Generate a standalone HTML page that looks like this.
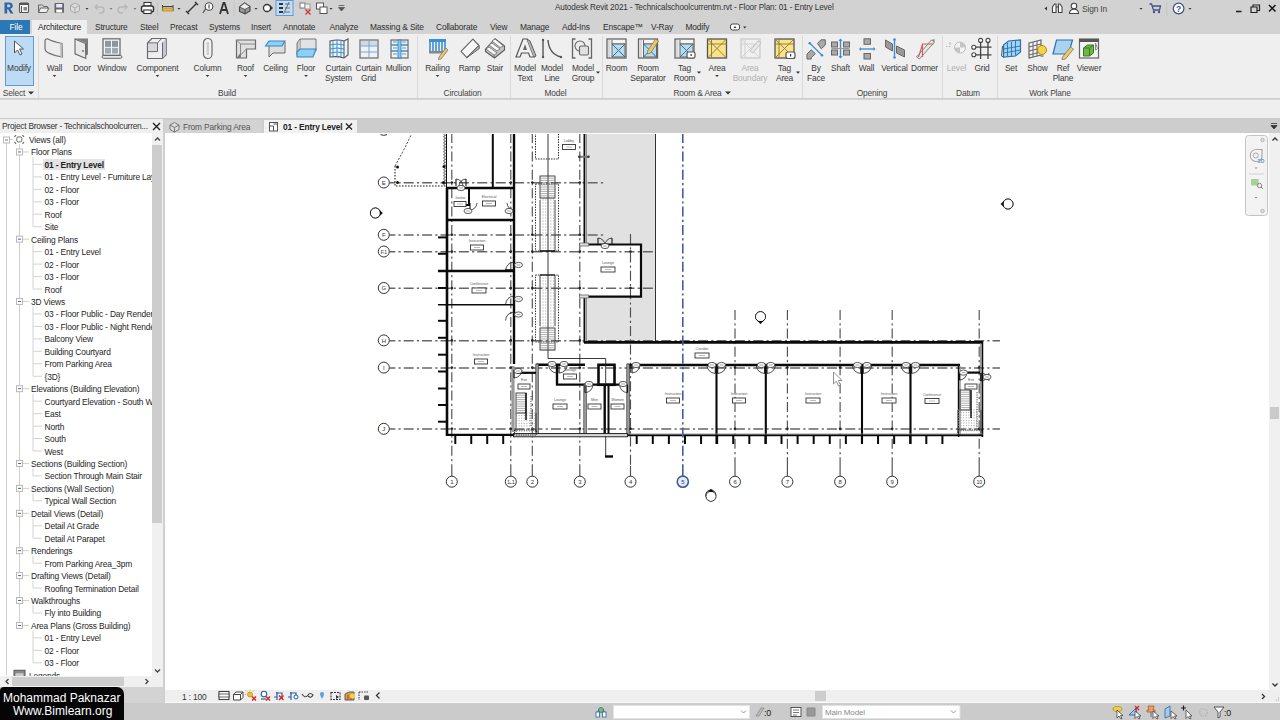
<!DOCTYPE html>
<html><head><meta charset="utf-8">
<style>
*{box-sizing:border-box}
html,body{margin:0;padding:0}
body{width:1280px;height:720px;overflow:hidden;position:relative;background:#d3d3d3;font-family:"Liberation Sans",sans-serif;font-size:8.4px;letter-spacing:-0.15px;color:#2e2e2e}
.a{position:absolute}
.t{position:absolute;white-space:nowrap;line-height:10px}
#titlebar{left:0;top:0;width:1280px;height:20px;background:#d2d2d2}
#tabrow{left:0;top:20px;width:1280px;height:14px;background:#d2d2d2}
#ribbon{left:0;top:34px;width:1280px;height:65px;background:#efefef;border-bottom:1px solid #cfcfcf}
#optbar{left:0;top:100px;width:1280px;height:19px;background:#efefef;border-bottom:1px solid #cbcbcb}
.rb{position:absolute;top:0;text-align:center;color:#3c3c3c;line-height:10.5px;white-space:nowrap}
.rl{position:absolute;top:53px;color:#444;white-space:nowrap}
.sep{position:absolute;top:2px;width:1px;height:62px;background:#dcdcdc}
.tab{position:absolute;top:4px;color:#333;white-space:nowrap}
.ic{position:absolute;top:3px}
.tree{position:absolute;color:#1e1e1e;white-space:nowrap;line-height:10px}

</style></head>
<body>
<div id="titlebar" class="a"></div>
<div id="tabrow" class="a"></div>
<svg class="a" style="left:0;top:0" width="1280" height="20">
 <!-- R logo -->
 <path d="M4.5,2.5 h5 a3.2,3.2 0 0 1 0.8,6.3 L13.5,13.5 h-3 L8,9.2 H7.2 V13.5 H4.5 Z M7.2,4.6 V7.2 H9 a1.3,1.3 0 0 0 0,-2.6 Z" fill="#2e67a8"/>
 <!-- project/info icon -->
 <rect x="19.5" y="3" width="9" height="9.5" rx="1" fill="#f4f4f4" stroke="#555" stroke-width="1.1"/><rect x="19.5" y="3" width="9" height="2" fill="#555"/><line x1="21.5" y1="6" x2="21.5" y2="12" stroke="#555"/><rect x="23.5" y="7" width="3.5" height="3.5" fill="#888"/>
 <!-- open -->
 <path d="M38.5,5 h4 l1,1.5 h4 v2 M38.5,5 v7.5 h8 l2.5,-4.5 h-8.5 l-2,4.5" fill="#eee" stroke="#666" stroke-width="1"/>
 <!-- save -->
 <rect x="54.5" y="3" width="9.5" height="10" rx="1" fill="#666"/><rect x="56.2" y="4" width="6" height="3.5" fill="#e8e8ff"/><rect x="56.2" y="9.5" width="6" height="3" fill="#fff"/>
 <!-- sync cube gray -->
 <path d="M70.5,5.5 L75,3 L79.5,5.5 V10.5 L75,13 L70.5,10.5 Z" fill="#ddd" stroke="#aaa" stroke-width="1"/><path d="M70.5,5.5 L75,8 L79.5,5.5 M75,8 V13" stroke="#aaa" fill="none"/>
 <path d="M85.5,8 h3 l-1.5,1.8z" fill="#333"/>
 <!-- undo -->
 <path d="M95,7 h6 a3,3 0 0 1 0,6 h-2 M97.5,4.5 L95,7 L97.5,9.5" fill="none" stroke="#b8b8b8" stroke-width="1.5"/>
 <path d="M109.5,8 h3 l-1.5,1.8z" fill="#777"/>
 <!-- redo -->
 <path d="M127,7 h-6 a3,3 0 0 0 0,6 h2 M124.5,4.5 L127,7 L124.5,9.5" fill="none" stroke="#b8b8b8" stroke-width="1.5"/>
 <path d="M133.5,8 h3 l-1.5,1.8z" fill="#777"/>
 <!-- print -->
 <rect x="144" y="2.5" width="7" height="3.5" fill="#fff" stroke="#333" stroke-width="1.1"/><rect x="141.5" y="6" width="12" height="6" rx="2" fill="#fafafa" stroke="#333" stroke-width="1.5"/><rect x="143.8" y="10" width="7.4" height="3.5" fill="#fff" stroke="#333" stroke-width="1.1"/>
 <line x1="157.5" y1="2" x2="157.5" y2="16" stroke="#c4c4c4"/>
 <!-- measure -->
 <path d="M162.5,5 V11 M173,5 V11 M162.5,6.5 H173" stroke="#444" stroke-width="1"/><rect x="162.5" y="8" width="10.5" height="3" fill="#e8b83a" stroke="#9a7a20" stroke-width="0.6"/>
 <path d="M177.5,8 h3 l-1.5,1.8z" fill="#333"/>
 <!-- aligned dim -->
 <path d="M187,13 L197,3 M186,11 L189,14 M195,2 L198,5" stroke="#333" stroke-width="1.4"/>
 <!-- tag -->
 <path d="M203,13 L206,8 " stroke="#555" stroke-width="1.3"/><circle cx="209" cy="6.5" r="3.8" fill="#fff" stroke="#444" stroke-width="1.1"/><path d="M209,4.5 V8.5" stroke="#333"/>
 <!-- A -->
 <path d="M220,14 L223.5,3 H224.5 L228,14 M221.5,10 H226.5" stroke="#333" stroke-width="1.8" fill="none"/>
 <line x1="234" y1="2" x2="234" y2="16" stroke="#c4c4c4"/>
 <!-- 3D house -->
 <path d="M239.5,7 L244.5,3 L250,6.5 V11 L245,14 L239.5,11.5 Z" fill="#999" stroke="#444" stroke-width="1.1"/><path d="M239.5,7 L244.5,3 L250,6.5 L245,9.5Z" fill="#eee" stroke="#444" stroke-width="0.8"/><path d="M245,9.5 V14" stroke="#444" fill="none"/>
 <path d="M254.5,8 h3 l-1.5,1.8z" fill="#333"/>
 <!-- section -->
 <circle cx="267" cy="8" r="3.5" fill="#fff" stroke="#333" stroke-width="1.3"/><path d="M270,5 L273,8 L270,11" fill="#333"/>
 <!-- thin lines (active) -->
 <rect x="276" y="0.5" width="17" height="15" fill="#c4dcf3" stroke="#5f9bd3"/>
 <path d="M279,4 h4 M279,8 h4 M279,12 h4" stroke="#333" stroke-width="1.8"/><path d="M285,4 h5 M285,8 h5 M285,12 h5 M283.5,14 L289,2" stroke="#555" stroke-width="0.8"/>
 <!-- close hidden -->
 <rect x="300" y="3" width="5" height="5" fill="#fff" stroke="#777"/><rect x="305" y="4" width="5" height="5" fill="#eee" stroke="#999"/><path d="M305.5,9.5 L310.5,14.5 M310.5,9.5 L305.5,14.5" stroke="#d33" stroke-width="1.4"/>
 <!-- switch windows -->
 <rect x="316.5" y="3" width="7" height="6" fill="#fff" stroke="#555"/><rect x="320" y="7" width="7" height="6.5" fill="#fff" stroke="#555"/>
 <path d="M329.5,8 h3 l-1.5,1.8z" fill="#333"/>
 <!-- customize -->
 <path d="M338.5,5.5 h6 M338.5,7.5 h6 L341.5,11 Z" stroke="#555" fill="#555" stroke-width="0.8"/>
 <!-- right side -->
 <path d="M1047,6.5 V10.5 L1044.5,8.5Z" fill="#333"/>
 <path d="M1052.5,12.5 V7 L1054.5,4 h1.5 V12.5 Z M1058.5,12.5 V4 h1.5 l2,3 V12.5 Z M1056,7 h2.5" fill="#fff" stroke="#444" stroke-width="1.1"/>
 <circle cx="1074" cy="6" r="2.8" fill="#fff" stroke="#444" stroke-width="1.1"/><path d="M1069.5,13.5 c0,-3 2,-4.2 4.5,-4.2 c2.5,0 4.5,1.2 4.5,4.2 Z" fill="#fff" stroke="#444" stroke-width="1.1"/>
 <path d="M1139.5,8 h3 l-1.5,1.8z" fill="#333"/>
 <path d="M1149.5,4 h2 l2,6 h6 l1,-4 h-8" stroke="#44548a" stroke-width="1.3" fill="none"/><circle cx="1154" cy="12" r="1.2" fill="#44548a"/><circle cx="1159" cy="12" r="1.2" fill="#44548a"/>
 <line x1="1166.7" y1="2" x2="1166.7" y2="16" stroke="#c4c4c4"/>
 <circle cx="1178.6" cy="8.5" r="5.3" fill="#fff" stroke="#3b4f88" stroke-width="1.2"/><text x="1178.6" y="11.5" font-size="8.5" font-weight="bold" fill="#3b4f88" text-anchor="middle" font-family="Liberation Sans">?</text>
 <path d="M1188.5,8 h3 l-1.5,1.8z" fill="#333"/>
 <path d="M1236,11.5 h5.5" stroke="#222" stroke-width="1.6"/>
 <path d="M1251,7 h6 v5.5 h-6 Z M1253,7 V5 h6.5 v5.5 h-2.5" fill="none" stroke="#222" stroke-width="1.2"/>
 <path d="M1269,5 L1275.5,11.5 M1275.5,5 L1269,11.5" stroke="#111" stroke-width="1.5"/>
</svg>
<div class="a" style="left:0;top:20px;width:30px;height:14px;background:#2a78b5"></div>
<div class="t" style="left:9.5px;top:21.7px;color:#fff;">File</div>
<div class="a" style="left:32px;top:20px;width:55px;height:14px;background:#efefef"></div>
<div class="t" style="left:38px;top:21.7px;color:#222">Architecture</div>
<div class="t" style="left:95px;top:21.7px">Structure</div>
<div class="t" style="left:140px;top:21.7px">Steel</div>
<div class="t" style="left:170px;top:21.7px">Precast</div>
<div class="t" style="left:209px;top:21.7px">Systems</div>
<div class="t" style="left:251px;top:21.7px">Insert</div>
<div class="t" style="left:283px;top:21.7px">Annotate</div>
<div class="t" style="left:329.5px;top:21.7px">Analyze</div>
<div class="t" style="left:370px;top:21.7px">Massing &amp; Site</div>
<div class="t" style="left:436px;top:21.7px">Collaborate</div>
<div class="t" style="left:490px;top:21.7px">View</div>
<div class="t" style="left:520px;top:21.7px">Manage</div>
<div class="t" style="left:562px;top:21.7px">Add-Ins</div>
<div class="t" style="left:603px;top:21.7px">Enscape™</div>
<div class="t" style="left:651px;top:21.7px">V-Ray</div>
<div class="t" style="left:685.5px;top:21.7px">Modify</div>
<svg class="a" style="left:728px;top:21.7px" width="22" height="10"><rect x="2.5" y="2" width="9" height="6" rx="2" fill="#fff" stroke="#444"/><path d="M5.5,6 L7,4 L8.5,6Z" fill="#333"/><path d="M15,4.5 h3.5 l-1.75,2z" fill="#333"/></svg>
<div class="t" style="left:555px;top:3px;color:#333;font-size:8.2px">Autodesk Revit 2021 - Technicalschoolcurrentm.rvt - Floor Plan: 01 - Entry Level</div>
<div class="t" style="left:1082px;top:3.5px;color:#444">Sign In</div>

<div id="ribbon" class="a"></div>
<div id="optbar" class="a"></div>
<div class="a" style="left:4.5px;top:36px;width:29.5px;height:50px;background:#bddbf5;border:1px solid #5f9bd3"></div>
<svg class="a" style="left:0;top:0" width="1280" height="100">
<g transform="translate(9.5,38)"><path d="M5,3 L5,15 L8,12 L10.5,17 L12.5,16 L10,11 L14,11 Z" fill="#fff" stroke="#555" stroke-width="1"/></g>
<g transform="translate(43.5,38)"><path d="M1.5,3 Q1.5,0.5 4.5,1 Q9,3.5 18.5,5.5 L19,19 Q10,17.5 4,14.5 Q1.5,13 1.5,11 Z" fill="#ececec" stroke="#6e6e6e" stroke-width="1.2"/><path d="M16.5,5.2 L18.5,5.5 L19,19 L17,19.2 Z" fill="#bcbcbc"/></g>
<path d="M52.7,75 L56.3,75 L54.5,77 Z" fill="#333"/>
<g transform="translate(74,38)"><path d="M1,0.5 H14 V16.5 L12,17.5 L12,5 Z" fill="#7d7d7d"/><path d="M1,1 L11.5,5.5 L11.8,20.5 L1,15.8 Z" fill="#e8e8ec" stroke="#666" stroke-width="1.1"/><circle cx="9" cy="13" r="1" fill="#777"/></g>
<g transform="translate(101.5,38)"><rect x="1.5" y="0.8" width="17" height="16.5" fill="#f4f4f4" stroke="#6e6e6e" stroke-width="1.3"/><rect x="3.5" y="2.8" width="6" height="6" fill="#8e959e"/><rect x="10.5" y="2.8" width="6" height="6" fill="#8e959e"/><rect x="3.5" y="9.8" width="6" height="5.8" fill="#a3a9b0"/><rect x="10.5" y="9.8" width="6" height="5.8" fill="#a3a9b0"/><path d="M2,17.5 H19 a1.4,1.4 0 0 1 0,2.8 H2 a1.4,1.4 0 0 1 0,-2.8Z" fill="#e6e6e6" stroke="#666" stroke-width="1"/></g>
<g transform="translate(146.5,38)"><path d="M1,4.9 L5.4,0.5 H19.7 V16.7 L15.7,20.5 H1 Z" fill="#eeeef0" stroke="#6a6a6a" stroke-width="1.2" stroke-linejoin="round"/><path d="M16,4.6 L19.5,0.9 V16.6 L16,20.2 Z" fill="#c2c6ce"/><rect x="1.8" y="5.6" width="8.6" height="7.4" fill="#d8d8dc"/><path d="M1,13.6 H11 V4.9 H1 M11,4.9 L14.8,0.8 M16,4.6 V20.2" stroke="#6a6a6a" fill="none" stroke-width="1"/></g>
<path d="M155.7,75 L159.3,75 L157.5,77 Z" fill="#333"/>
<g transform="translate(197,38)"><rect x="6.5" y="0.5" width="8.5" height="20" rx="4.2" fill="#f2f2f2" stroke="#6e6e6e" stroke-width="1.2"/><rect x="9.5" y="4" width="2.5" height="13" fill="#cfcfd3"/></g>
<path d="M205.7,75 L209.3,75 L207.5,77 Z" fill="#333"/>
<g transform="translate(235.5,38)"><path d="M1,2 L20,2 L20,11 L11,11 L11,20 L1,20 Z" fill="#e0e0e0" stroke="#6a6a6a" stroke-width="1.2"/><path d="M1,2 L5,6 L20,6 M5,6 L5,20 M11,11 L5,17" fill="none" stroke="#888"/><path d="M1,20 L5,15 L5,20Z" fill="#777"/></g>
<path d="M243.7,75 L247.3,75 L245.5,77 Z" fill="#333"/>
<g transform="translate(265,38)"><path d="M4,4 L20,4 L20,15 L8,15 L4,19 Z" fill="#dedede" stroke="#6a6a6a"/><path d="M0.5,8 L4,3 L20,3 L17,8 Z" fill="#8fd0f2" stroke="#3385c6" stroke-width="1.1"/></g>
<g transform="translate(296,38)"><path d="M4,1 L20,1 L20,13 L4,13 Z" fill="#e2e2e2" stroke="#777"/><path d="M4,1 L1,5 L1,17 L4,13" fill="#c8c8c8" stroke="#777"/><path d="M1,14 L4,11 L20,11 L17,19 L1,19 Z" fill="#8fd0f2" stroke="#3385c6" stroke-width="1.1"/></g>
<path d="M304.2,75 L307.8,75 L306,77 Z" fill="#333"/>
<g transform="translate(328,38)"><path d="M2,3 Q10,1 16,3 L20,1 L20,17 L16,20 Q10,18 2,19 Z" fill="#eaf4fb" stroke="#555" stroke-width="1.1"/><path d="M5,2.5 V18.5 M9,2 V18.5 M13,2.3 V19 M2,7 Q9,5 16,7 M2,11 Q9,9 16,11 M2,15 Q9,13 16,15" stroke="#3f8fd0" stroke-width="1" fill="none"/><path d="M16,3 L16,20" stroke="#555"/></g>
<g transform="translate(358,38)"><rect x="2" y="2" width="18" height="18" fill="#eef2f6" stroke="#6a6a6a" stroke-width="1.2"/><rect x="3" y="3" width="16" height="5" fill="#cfdce8"/><path d="M11,2 V20 M2,8 H20 M2,14 H20" stroke="#7aa6cc" stroke-width="1"/></g>
<g transform="translate(389,38)"><rect x="2" y="2" width="17" height="18" fill="#f0f0f0" stroke="#6a6a6a" stroke-width="1.2"/><path d="M2,7 H19 M2,13 H19" stroke="#3f8fd0" stroke-width="1.6"/><rect x="9" y="2" width="3" height="18" fill="#8cc6ee" stroke="#2f7fc0" stroke-width="0.8"/><path d="M4,4 H8 M13,4 H17 M4,10 H8 M13,10 H17 M4,16 H8 M13,16 H17" stroke="#9bb" stroke-width="1.5"/></g>
<g transform="translate(428,38)"><rect x="1" y="1" width="17" height="3" fill="#3f8fd0"/><path d="M2,4 V14 M5,4 V14 M8,4 V14 M11,4 V14 M14,4 V14 M17,4 V14" stroke="#3f8fd0" stroke-width="1.6"/><rect x="1" y="13" width="17" height="2.5" fill="#888"/><path d="M11,19 L18,10 L20,12 L13,21 L10.5,21.5 Z" fill="#f3c85a" stroke="#777" stroke-width="0.8"/></g>
<path d="M435.7,75 L439.3,75 L437.5,77 Z" fill="#333"/>
<g transform="translate(460,38)"><path d="M1,13.3 L12.9,1.1 L19,7.5 L6.9,19.6 Z" fill="#f7f7f7" stroke="#626262" stroke-width="1.1" stroke-linejoin="round"/><path d="M19,7.5 L19.4,10.5 L6.9,19.6 Z" fill="#b9b9b9" stroke="#626262" stroke-width="1" stroke-linejoin="round"/></g>
<g transform="translate(484.5,38)"><path d="M1,11 L10.5,0.8 L20,8 L20,12 L10,20 L1,13.5 Z" fill="#c4c4c4" stroke="#5e5e5e" stroke-width="1.1" stroke-linejoin="round"/><path d="M1.5,11 L4.5,9 L12.5,15 L9.5,17 Z M4.5,7 L7.5,5 L15.5,11 L12.5,13 Z M7.5,3 L10.5,1 L19,8 L15.5,9.5 Z" fill="#fafafa" stroke="#6a6a6a" stroke-width="0.8"/><path d="M9.5,17 L10,20 M1.5,11 L1,13.5" stroke="#5e5e5e" stroke-width="0.8"/></g>
<g transform="translate(515,38)"><path d="M1,19 L8,1 L12,1 L19,19 L15,19 L13.5,15 L6.5,15 L5,19 Z" fill="#f2f2f2" stroke="#555" stroke-width="1.2"/><path d="M12,1 L15,3 L21,18 L19,19" fill="#bbb" stroke="#555"/><path d="M8,12 L10,6 L12,12 Z" fill="#666"/></g>
<g transform="translate(541,38)"><path d="M2,2 V19" stroke="#555" stroke-width="1.4"/><circle cx="2" cy="2" r="1.2" fill="#555"/><circle cx="2" cy="19" r="1.2" fill="#555"/><path d="M7,2 Q8,16 20,19" stroke="#555" stroke-width="1.4" fill="none"/><circle cx="20" cy="19" r="1.2" fill="#555"/></g>
<g transform="translate(571.5,38)"><path d="M4,1 H1 V20 H4 M17,1 H20 V20 H17" stroke="#666" stroke-width="1.3" fill="none"/><circle cx="8.5" cy="8" r="5" fill="#ececec" stroke="#666" stroke-width="1.1"/><rect x="8" y="8" width="9" height="9" rx="1.5" fill="#e0e0e0" stroke="#666" stroke-width="1.1"/></g>
<g transform="translate(606,38)"><rect x="1" y="1" width="19" height="19" fill="#f5f5f5" stroke="#666" stroke-width="1.3"/><rect x="2" y="2" width="2.5" height="17" fill="#d8d8d8"/><path d="M6,2 V6 H19" stroke="#666" fill="none"/><rect x="6" y="6" width="13" height="13" fill="#b5dcf0" stroke="#666"/><path d="M6,6 L19,19 M19,6 L6,19" stroke="#3b6e8f" stroke-width="1"/></g>
<g transform="translate(637.5,38)"><rect x="1" y="1" width="19" height="19" fill="#f5f5f5" stroke="#666" stroke-width="1.3"/><rect x="2" y="2" width="2.5" height="17" fill="#d8d8d8"/><path d="M6,2 V6 H19" stroke="#666" fill="none"/><rect x="6" y="6" width="13" height="13" fill="#b5dcf0" stroke="#666"/><path d="M6,6 L19,19 M19,6 L6,19" stroke="#3b6e8f" stroke-width="1"/><path d="M10,13 L18,1 L21,3 L13,15 L10,16 Z" fill="#f3c85a" stroke="#777" stroke-width="0.8"/></g>
<g transform="translate(674,38)"><rect x="1" y="1" width="19" height="19" fill="#f5f5f5" stroke="#666" stroke-width="1.3"/><rect x="2" y="2" width="2.5" height="17" fill="#d8d8d8"/><path d="M6,2 V6 H19" stroke="#666" fill="none"/><rect x="6" y="6" width="13" height="13" fill="#b5dcf0" stroke="#666"/><path d="M6,6 L19,19 M19,6 L6,19" stroke="#3b6e8f" stroke-width="1"/><rect x="13" y="14" width="8" height="6" rx="1.5" fill="#fff" stroke="#555" stroke-width="1.2"/><rect x="16.5" y="16" width="1.2" height="2" fill="#333"/></g>
<g transform="translate(706.5,38)"><rect x="1" y="1" width="19" height="19" fill="#fbe38a" stroke="#555" stroke-width="1.3"/><path d="M1,6 H20 M5,1 V20 M1,1 L20,20 M20,1 L1,20" stroke="#8a7a3a" stroke-width="0.9"/></g>
<path d="M715.2,75 L718.8,75 L717,77 Z" fill="#333"/>
<g transform="translate(740,38)"><g opacity="0.35"><rect x="1" y="1" width="19" height="19" fill="#f2f2f2" stroke="#888" stroke-width="1.3"/><path d="M1,6 H20 M5,1 V20 M1,1 L20,20 M20,1 L1,20" stroke="#999" stroke-width="0.9"/><path d="M10,13 L18,3 L21,5 L13,15 Z" fill="#ddd" stroke="#777"/></g></g>
<g transform="translate(774,38)"><rect x="1" y="1" width="19" height="19" fill="#fbe38a" stroke="#555" stroke-width="1.3"/><path d="M1,6 H20 M5,1 V20 M1,1 L20,20 M20,1 L1,20" stroke="#8a7a3a" stroke-width="0.9"/><rect x="12" y="14" width="9" height="6.5" rx="2" fill="#fff" stroke="#555" stroke-width="1.2"/><rect x="16" y="16" width="1.2" height="2.5" fill="#333"/></g>
<g transform="translate(806,38)"><path d="M11.5,5.5 L15,1.8 H19.3 V7 L15.3,10.8 Z" fill="#a9a9a9" stroke="#666" stroke-width="1"/><path d="M1,16 L5.2,11.8 L9.3,15.6 L5.3,19.6 V21 H1 Z" fill="#a9a9a9" stroke="#666" stroke-width="1"/><path d="M3.8,5.2 L16,17.3" stroke="#3f8fd0" stroke-width="1.2"/><circle cx="3.8" cy="5.2" r="1.3" fill="#3f8fd0"/><circle cx="16" cy="17.3" r="1.3" fill="#3f8fd0"/></g>
<g transform="translate(830.5,38)"><rect x="1" y="4" width="6" height="5" fill="#aaa" stroke="#666"/><rect x="13" y="4" width="6" height="5" fill="#aaa" stroke="#666"/><rect x="1" y="12" width="6" height="5" fill="#aaa" stroke="#666"/><rect x="13" y="12" width="6" height="5" fill="#aaa" stroke="#666"/><path d="M10,1 V20" stroke="#3f8fd0" stroke-width="1.4"/><path d="M8,3 L10,0.5 L12,3 M8,18 L10,20.5 L12,18" fill="#3f8fd0"/><path d="M1,10.5 H19" stroke="#999"/></g>
<g transform="translate(856.5,38)"><rect x="7.5" y="0.8" width="6.5" height="5.5" fill="#a9a9a9" stroke="#666" stroke-width="1"/><rect x="7.5" y="15.5" width="6.5" height="5.5" fill="#a9a9a9" stroke="#666" stroke-width="1"/><path d="M3.5,11 H18" stroke="#3f8fd0" stroke-width="1.3"/><path d="M4.5,9 L2.5,11 L4.5,13 Z M17,9 L19,11 L17,13 Z" fill="#3f8fd0"/></g>
<g transform="translate(884.5,38)"><path d="M1,2 L8,6 L8,13 L1,9 Z" fill="#999" stroke="#666"/><path d="M12,8 L20,12 L20,19 L12,15 Z" fill="#999" stroke="#666"/><path d="M10,1 V20" stroke="#3f8fd0" stroke-width="1.4"/><circle cx="10" cy="1.5" r="1.3" fill="#3f8fd0"/><circle cx="10" cy="19.5" r="1.3" fill="#3f8fd0"/></g>
<g transform="translate(914.5,38)"><path d="M2,19 L17,2 L20,4 L5,21 Z" fill="#e6e6e6" stroke="#888"/><path d="M4,19 L8,6 L19,6 M8,6 L8,19" stroke="#c96060" stroke-width="1.1" fill="none"/><path d="M17,2 L20,1 L20,4 Z" fill="#888"/></g>
<g transform="translate(945,38)"><g opacity="0.35"><path d="M1,8.5 H7" stroke="#555" stroke-dasharray="1.5 1.5"/><path d="M5,4 V7" stroke="#555"/><circle cx="15" cy="9.5" r="5.5" fill="#fff" stroke="#666"/><path d="M15,4 A5.5,5.5 0 0 1 20.5,9.5 H15Z M15,15 A5.5,5.5 0 0 1 9.5,9.5 H15Z" fill="#777"/></g></g>
<g transform="translate(971,38)"><path d="M9.6,4.5 V21 M17,4.5 V21 M4.8,9.2 H20.5 M4.8,16.8 H20.5" stroke="#444" stroke-width="1.3"/><circle cx="9.6" cy="2.4" r="2" fill="#fff" stroke="#444" stroke-width="1.1"/><circle cx="17" cy="2.4" r="2" fill="#fff" stroke="#444" stroke-width="1.1"/><circle cx="2.8" cy="9.2" r="2" fill="#fff" stroke="#444" stroke-width="1.1"/><circle cx="2.8" cy="16.8" r="2" fill="#fff" stroke="#444" stroke-width="1.1"/></g>
<g transform="translate(1000.5,38)"><path d="M3,7 L8,3 L20,2 L20,14 L15,18 L3,19 Z" fill="#9fd3f2" stroke="#2a70b0" stroke-width="1.2"/><path d="M7,5 V18 M11,4 V18 M15,3 V17 M3,11 L20,8 M3,15 L20,12" stroke="#2a70b0" stroke-width="0.9" fill="none"/><path d="M2,8 L1,18 L3,19" stroke="#555" fill="none"/></g>
<g transform="translate(1027,38)"><path d="M2,5 L14,2 L14,17 L2,20 Z" fill="#f0f0f0" stroke="#666" stroke-width="1.2"/><path d="M6,4 V19 M10,3 V18 M2,9 L14,6 M2,13 L14,10 M2,17 L14,14" stroke="#666"/><circle cx="15" cy="12" r="4.5" fill="#f5d443" stroke="#b08a10"/><rect x="13.5" y="16" width="3" height="3" fill="#999"/></g>
<g transform="translate(1052.5,38)"><path d="M4,2 L20,2 L16,16 L0.5,16 Z" fill="#a7d4ef" stroke="#2f6fb0" stroke-width="1.2"/><path d="M10,19 L18,9 L21,11 L13,21 L9.5,21.5 Z" fill="#f3c85a" stroke="#777" stroke-width="0.8"/></g>
<g transform="translate(1078.5,38)"><rect x="1" y="1" width="19" height="19" fill="#f4f4f4" stroke="#666" stroke-width="1.2"/><rect x="1" y="1" width="19" height="3" fill="#555"/><path d="M5,10 L9,7 L15,7 L15,15 L11,18 L5,18 Z" fill="#6db845" stroke="#3b7a22"/><path d="M5,10 L11,10 L15,7 M11,10 V18" stroke="#3b7a22" fill="none"/><path d="M17,5 L17,12 L19,10.5 Z" fill="#fff" stroke="#888"/></g>
</svg>
<div class="t" style="left:-21px;width:80px;text-align:center;top:62.5px;color:#3a3a3a">Modify</div>
<div class="t" style="left:14.5px;width:80px;text-align:center;top:62.5px;color:#3a3a3a">Wall</div>
<div class="t" style="left:42px;width:80px;text-align:center;top:62.5px;color:#3a3a3a">Door</div>
<div class="t" style="left:72px;width:80px;text-align:center;top:62.5px;color:#3a3a3a">Window</div>
<div class="t" style="left:117.5px;width:80px;text-align:center;top:62.5px;color:#3a3a3a">Component</div>
<div class="t" style="left:167.5px;width:80px;text-align:center;top:62.5px;color:#3a3a3a">Column</div>
<div class="t" style="left:205.5px;width:80px;text-align:center;top:62.5px;color:#3a3a3a">Roof</div>
<div class="t" style="left:235.5px;width:80px;text-align:center;top:62.5px;color:#3a3a3a">Ceiling</div>
<div class="t" style="left:266px;width:80px;text-align:center;top:62.5px;color:#3a3a3a">Floor</div>
<div class="t" style="left:298.5px;width:80px;text-align:center;top:62.5px;color:#3a3a3a">Curtain</div>
<div class="t" style="left:298.5px;width:80px;text-align:center;top:73.0px;color:#3a3a3a">System</div>
<div class="t" style="left:328.5px;width:80px;text-align:center;top:62.5px;color:#3a3a3a">Curtain</div>
<div class="t" style="left:328.5px;width:80px;text-align:center;top:73.0px;color:#3a3a3a">Grid</div>
<div class="t" style="left:358.5px;width:80px;text-align:center;top:62.5px;color:#3a3a3a">Mullion</div>
<div class="t" style="left:397.5px;width:80px;text-align:center;top:62.5px;color:#3a3a3a">Railing</div>
<div class="t" style="left:429.5px;width:80px;text-align:center;top:62.5px;color:#3a3a3a">Ramp</div>
<div class="t" style="left:455px;width:80px;text-align:center;top:62.5px;color:#3a3a3a">Stair</div>
<div class="t" style="left:485px;width:80px;text-align:center;top:62.5px;color:#3a3a3a">Model</div>
<div class="t" style="left:485px;width:80px;text-align:center;top:73.0px;color:#3a3a3a">Text</div>
<div class="t" style="left:512px;width:80px;text-align:center;top:62.5px;color:#3a3a3a">Model</div>
<div class="t" style="left:512px;width:80px;text-align:center;top:73.0px;color:#3a3a3a">Line</div>
<div class="t" style="left:543px;width:80px;text-align:center;top:62.5px;color:#3a3a3a">Model</div>
<div class="t" style="left:543px;width:80px;text-align:center;top:73.0px;color:#3a3a3a">Group</div>
<svg class="a" style="left:596px;top:71px" width="5" height="4"><path d="M0,0.5 H4 L2,2.8Z" fill="#333"/></svg>
<div class="t" style="left:576.5px;width:80px;text-align:center;top:62.5px;color:#3a3a3a">Room</div>
<div class="t" style="left:608px;width:80px;text-align:center;top:62.5px;color:#3a3a3a">Room</div>
<div class="t" style="left:608px;width:80px;text-align:center;top:73.0px;color:#3a3a3a">Separator</div>
<div class="t" style="left:644.5px;width:80px;text-align:center;top:62.5px;color:#3a3a3a">Tag</div>
<div class="t" style="left:644.5px;width:80px;text-align:center;top:73.0px;color:#3a3a3a">Room</div>
<svg class="a" style="left:696.5px;top:71px" width="5" height="4"><path d="M0,0.5 H4 L2,2.8Z" fill="#333"/></svg>
<div class="t" style="left:677px;width:80px;text-align:center;top:62.5px;color:#3a3a3a">Area</div>
<div class="t" style="left:710px;width:80px;text-align:center;top:62.5px;color:#b0b0b0">Area</div>
<div class="t" style="left:710px;width:80px;text-align:center;top:73.0px;color:#b0b0b0">Boundary</div>
<div class="t" style="left:744.5px;width:80px;text-align:center;top:62.5px;color:#3a3a3a">Tag</div>
<div class="t" style="left:744.5px;width:80px;text-align:center;top:73.0px;color:#3a3a3a">Area</div>
<svg class="a" style="left:795.5px;top:71px" width="5" height="4"><path d="M0,0.5 H4 L2,2.8Z" fill="#333"/></svg>
<div class="t" style="left:776px;width:80px;text-align:center;top:62.5px;color:#3a3a3a">By</div>
<div class="t" style="left:776px;width:80px;text-align:center;top:73.0px;color:#3a3a3a">Face</div>
<div class="t" style="left:800.5px;width:80px;text-align:center;top:62.5px;color:#3a3a3a">Shaft</div>
<div class="t" style="left:826.5px;width:80px;text-align:center;top:62.5px;color:#3a3a3a">Wall</div>
<div class="t" style="left:854.5px;width:80px;text-align:center;top:62.5px;color:#3a3a3a">Vertical</div>
<div class="t" style="left:884.5px;width:80px;text-align:center;top:62.5px;color:#3a3a3a">Dormer</div>
<div class="t" style="left:916.5px;width:80px;text-align:center;top:62.5px;color:#b0b0b0">Level</div>
<div class="t" style="left:942px;width:80px;text-align:center;top:62.5px;color:#3a3a3a">Grid</div>
<div class="t" style="left:971px;width:80px;text-align:center;top:62.5px;color:#3a3a3a">Set</div>
<div class="t" style="left:997.5px;width:80px;text-align:center;top:62.5px;color:#3a3a3a">Show</div>
<div class="t" style="left:1023px;width:80px;text-align:center;top:62.5px;color:#3a3a3a">Ref</div>
<div class="t" style="left:1023px;width:80px;text-align:center;top:73.0px;color:#3a3a3a">Plane</div>
<div class="t" style="left:1049px;width:80px;text-align:center;top:62.5px;color:#3a3a3a">Viewer</div>
<div class="t" style="left:-31px;width:90px;text-align:center;top:87.5px;color:#444">Select</div>
<svg class="a" style="left:28px;top:91px" width="6" height="4"><path d="M0,0.5 H6 L3,3.5Z" fill="#333"/></svg>
<div class="t" style="left:182px;width:90px;text-align:center;top:87.5px;color:#444">Build</div>
<div class="t" style="left:417.5px;width:90px;text-align:center;top:87.5px;color:#444">Circulation</div>
<div class="t" style="left:510.5px;width:90px;text-align:center;top:87.5px;color:#444">Model</div>
<div class="t" style="left:652.5px;width:90px;text-align:center;top:87.5px;color:#444">Room &amp; Area</div>
<svg class="a" style="left:725px;top:91px" width="6" height="4"><path d="M0,0.5 H6 L3,3.5Z" fill="#333"/></svg>
<div class="t" style="left:827px;width:90px;text-align:center;top:87.5px;color:#444">Opening</div>
<div class="t" style="left:923px;width:90px;text-align:center;top:87.5px;color:#444">Datum</div>
<div class="t" style="left:1005px;width:90px;text-align:center;top:87.5px;color:#444">Work Plane</div>
<div class="a" style="left:37.5px;top:36px;width:1px;height:62px;background:#dadada"></div>
<div class="a" style="left:416.5px;top:36px;width:1px;height:62px;background:#dadada"></div>
<div class="a" style="left:509.5px;top:36px;width:1px;height:62px;background:#dadada"></div>
<div class="a" style="left:601.5px;top:36px;width:1px;height:62px;background:#dadada"></div>
<div class="a" style="left:801.5px;top:36px;width:1px;height:62px;background:#dadada"></div>
<div class="a" style="left:941.5px;top:36px;width:1px;height:62px;background:#dadada"></div>
<div class="a" style="left:997px;top:36px;width:1px;height:62px;background:#dadada"></div>
<div class="a" style="left:0;top:119px;width:163px;height:568px;background:#fff"></div>
<div class="a" style="left:0;top:119px;width:163px;height:14px;background:#efefef"></div>
<div class="t" style="left:2px;top:121px;color:#333;letter-spacing:-0.25px">Project Browser - Technicalschoolcurren...</div>
<svg class="a" style="left:152px;top:122px" width="9" height="9"><path d="M1,1 L8,8 M8,1 L1,8" stroke="#222" stroke-width="1.4"/></svg>
<div class="a" style="left:0;top:133px;width:152px;height:543px;overflow:hidden">
<svg class="a" style="left:0;top:0" width="152" height="543"><line x1="6.5" y1="9.5" x2="6.5" y2="542.2800000000001" stroke="#cfcfcf" stroke-width="1"/><line x1="19.5" y1="11.5" x2="19.5" y2="492.44000000000005" stroke="#cfcfcf" stroke-width="1"/><line x1="23" y1="18.960000000000008" x2="29" y2="18.960000000000008" stroke="#cfcfcf"/><rect x="16.5" y="15.960000000000008" width="6" height="6" fill="#fff" stroke="#b8b8b8" stroke-width="1"/><line x1="18" y1="18.960000000000008" x2="21" y2="18.960000000000008" stroke="#666"/><line x1="33" y1="23.960000000000008" x2="33" y2="93.72" stroke="#d3d3d3"/><line x1="33" y1="31.420000000000016" x2="42" y2="31.420000000000016" stroke="#d3d3d3"/><line x1="33" y1="43.879999999999995" x2="42" y2="43.879999999999995" stroke="#d3d3d3"/><line x1="33" y1="56.34" x2="42" y2="56.34" stroke="#d3d3d3"/><line x1="33" y1="68.80000000000001" x2="42" y2="68.80000000000001" stroke="#d3d3d3"/><line x1="33" y1="81.25999999999999" x2="42" y2="81.25999999999999" stroke="#d3d3d3"/><line x1="33" y1="93.72" x2="42" y2="93.72" stroke="#d3d3d3"/><line x1="23" y1="106.18" x2="29" y2="106.18" stroke="#cfcfcf"/><rect x="16.5" y="103.18" width="6" height="6" fill="#fff" stroke="#b8b8b8" stroke-width="1"/><line x1="18" y1="106.18" x2="21" y2="106.18" stroke="#666"/><line x1="33" y1="111.18" x2="33" y2="156.01999999999998" stroke="#d3d3d3"/><line x1="33" y1="118.64000000000001" x2="42" y2="118.64000000000001" stroke="#d3d3d3"/><line x1="33" y1="131.10000000000002" x2="42" y2="131.10000000000002" stroke="#d3d3d3"/><line x1="33" y1="143.56" x2="42" y2="143.56" stroke="#d3d3d3"/><line x1="33" y1="156.01999999999998" x2="42" y2="156.01999999999998" stroke="#d3d3d3"/><line x1="23" y1="168.48000000000002" x2="29" y2="168.48000000000002" stroke="#cfcfcf"/><rect x="16.5" y="165.48000000000002" width="6" height="6" fill="#fff" stroke="#b8b8b8" stroke-width="1"/><line x1="18" y1="168.48000000000002" x2="21" y2="168.48000000000002" stroke="#666"/><line x1="33" y1="173.48000000000002" x2="33" y2="243.24" stroke="#d3d3d3"/><line x1="33" y1="180.94" x2="42" y2="180.94" stroke="#d3d3d3"/><line x1="33" y1="193.39999999999998" x2="42" y2="193.39999999999998" stroke="#d3d3d3"/><line x1="33" y1="205.86" x2="42" y2="205.86" stroke="#d3d3d3"/><line x1="33" y1="218.32000000000005" x2="42" y2="218.32000000000005" stroke="#d3d3d3"/><line x1="33" y1="230.78000000000003" x2="42" y2="230.78000000000003" stroke="#d3d3d3"/><line x1="33" y1="243.24" x2="42" y2="243.24" stroke="#d3d3d3"/><line x1="23" y1="255.70000000000005" x2="29" y2="255.70000000000005" stroke="#cfcfcf"/><rect x="16.5" y="252.70000000000005" width="6" height="6" fill="#fff" stroke="#b8b8b8" stroke-width="1"/><line x1="18" y1="255.70000000000005" x2="21" y2="255.70000000000005" stroke="#666"/><line x1="33" y1="260.70000000000005" x2="33" y2="318.0" stroke="#d3d3d3"/><line x1="33" y1="268.16" x2="42" y2="268.16" stroke="#d3d3d3"/><line x1="33" y1="280.62" x2="42" y2="280.62" stroke="#d3d3d3"/><line x1="33" y1="293.08000000000004" x2="42" y2="293.08000000000004" stroke="#d3d3d3"/><line x1="33" y1="305.54" x2="42" y2="305.54" stroke="#d3d3d3"/><line x1="33" y1="318.0" x2="42" y2="318.0" stroke="#d3d3d3"/><line x1="23" y1="330.46000000000004" x2="29" y2="330.46000000000004" stroke="#cfcfcf"/><rect x="16.5" y="327.46000000000004" width="6" height="6" fill="#fff" stroke="#b8b8b8" stroke-width="1"/><line x1="18" y1="330.46000000000004" x2="21" y2="330.46000000000004" stroke="#666"/><line x1="33" y1="335.46000000000004" x2="33" y2="342.92" stroke="#d3d3d3"/><line x1="33" y1="342.92" x2="42" y2="342.92" stroke="#d3d3d3"/><line x1="23" y1="355.38" x2="29" y2="355.38" stroke="#cfcfcf"/><rect x="16.5" y="352.38" width="6" height="6" fill="#fff" stroke="#b8b8b8" stroke-width="1"/><line x1="18" y1="355.38" x2="21" y2="355.38" stroke="#666"/><line x1="33" y1="360.38" x2="33" y2="367.84000000000003" stroke="#d3d3d3"/><line x1="33" y1="367.84000000000003" x2="42" y2="367.84000000000003" stroke="#d3d3d3"/><line x1="23" y1="380.29999999999995" x2="29" y2="380.29999999999995" stroke="#cfcfcf"/><rect x="16.5" y="377.29999999999995" width="6" height="6" fill="#fff" stroke="#b8b8b8" stroke-width="1"/><line x1="18" y1="380.29999999999995" x2="21" y2="380.29999999999995" stroke="#666"/><line x1="33" y1="385.29999999999995" x2="33" y2="405.22" stroke="#d3d3d3"/><line x1="33" y1="392.76" x2="42" y2="392.76" stroke="#d3d3d3"/><line x1="33" y1="405.22" x2="42" y2="405.22" stroke="#d3d3d3"/><line x1="23" y1="417.68000000000006" x2="29" y2="417.68000000000006" stroke="#cfcfcf"/><rect x="16.5" y="414.68000000000006" width="6" height="6" fill="#fff" stroke="#b8b8b8" stroke-width="1"/><line x1="18" y1="417.68000000000006" x2="21" y2="417.68000000000006" stroke="#666"/><line x1="33" y1="422.68000000000006" x2="33" y2="430.1400000000001" stroke="#d3d3d3"/><line x1="33" y1="430.1400000000001" x2="42" y2="430.1400000000001" stroke="#d3d3d3"/><line x1="23" y1="442.6" x2="29" y2="442.6" stroke="#cfcfcf"/><rect x="16.5" y="439.6" width="6" height="6" fill="#fff" stroke="#b8b8b8" stroke-width="1"/><line x1="18" y1="442.6" x2="21" y2="442.6" stroke="#666"/><line x1="33" y1="447.6" x2="33" y2="455.06000000000006" stroke="#d3d3d3"/><line x1="33" y1="455.06000000000006" x2="42" y2="455.06000000000006" stroke="#d3d3d3"/><line x1="23" y1="467.52" x2="29" y2="467.52" stroke="#cfcfcf"/><rect x="16.5" y="464.52" width="6" height="6" fill="#fff" stroke="#b8b8b8" stroke-width="1"/><line x1="18" y1="467.52" x2="21" y2="467.52" stroke="#666"/><line x1="33" y1="472.52" x2="33" y2="479.98" stroke="#d3d3d3"/><line x1="33" y1="479.98" x2="42" y2="479.98" stroke="#d3d3d3"/><line x1="23" y1="492.44000000000005" x2="29" y2="492.44000000000005" stroke="#cfcfcf"/><rect x="16.5" y="489.44000000000005" width="6" height="6" fill="#fff" stroke="#b8b8b8" stroke-width="1"/><line x1="18" y1="492.44000000000005" x2="21" y2="492.44000000000005" stroke="#666"/><line x1="33" y1="497.44000000000005" x2="33" y2="529.82" stroke="#d3d3d3"/><line x1="33" y1="504.9000000000001" x2="42" y2="504.9000000000001" stroke="#d3d3d3"/><line x1="33" y1="517.36" x2="42" y2="517.36" stroke="#d3d3d3"/><line x1="33" y1="529.82" x2="42" y2="529.82" stroke="#d3d3d3"/><rect x="3.5" y="4.0" width="6" height="6" fill="#fff" stroke="#b8b8b8"/><line x1="5" y1="7.0" x2="8" y2="7.0" stroke="#777"/><line x1="10" y1="6.5" x2="13" y2="6.5" stroke="#cfcfcf"/><path d="M14.5,4.0 l1.5,-2 M22.5,2.0 l1.5,2 M24,9.0 l-1.5,2 M16,11.0 l-1.5,-2" stroke="#666" fill="none" stroke-width="1.2"/><rect x="16.8" y="3.9" width="5" height="5" rx="1.5" fill="none" stroke="#666" stroke-width="1"/><rect x="14" y="537.2800000000001" width="11" height="9" fill="#8a8a8a" stroke="#555"/><rect x="15.5" y="540.2800000000001" width="8" height="4" fill="#ccc"/></svg>
<div class="a" style="left:43px;top:25.920000000000016px;width:62px;height:11px;background:#e3e3e3"></div>
<div class="tree" style="left:29px;top:2.0px;">Views (all)</div>
<div class="tree" style="left:31px;top:14.460000000000008px;">Floor Plans</div>
<div class="tree" style="left:44.5px;top:26.920000000000016px;font-weight:bold;">01 - Entry Level</div>
<div class="tree" style="left:44.5px;top:39.379999999999995px;">01 - Entry Level - Furniture Layout</div>
<div class="tree" style="left:44.5px;top:51.84px;">02 - Floor</div>
<div class="tree" style="left:44.5px;top:64.30000000000001px;">03 - Floor</div>
<div class="tree" style="left:44.5px;top:76.75999999999999px;">Roof</div>
<div class="tree" style="left:44.5px;top:89.22px;">Site</div>
<div class="tree" style="left:31px;top:101.68px;">Ceiling Plans</div>
<div class="tree" style="left:44.5px;top:114.14000000000001px;">01 - Entry Level</div>
<div class="tree" style="left:44.5px;top:126.60000000000002px;">02 - Floor</div>
<div class="tree" style="left:44.5px;top:139.06px;">03 - Floor</div>
<div class="tree" style="left:44.5px;top:151.51999999999998px;">Roof</div>
<div class="tree" style="left:31px;top:163.98000000000002px;">3D Views</div>
<div class="tree" style="left:44.5px;top:176.44px;">03 - Floor Public - Day Render</div>
<div class="tree" style="left:44.5px;top:188.89999999999998px;">03 - Floor Public - Night Render</div>
<div class="tree" style="left:44.5px;top:201.36px;">Balcony View</div>
<div class="tree" style="left:44.5px;top:213.82000000000005px;">Building Courtyard</div>
<div class="tree" style="left:44.5px;top:226.28000000000003px;">From Parking Area</div>
<div class="tree" style="left:44.5px;top:238.74px;">{3D}</div>
<div class="tree" style="left:31px;top:251.20000000000005px;">Elevations (Building Elevation)</div>
<div class="tree" style="left:44.5px;top:263.66px;">Courtyard Elevation - South West</div>
<div class="tree" style="left:44.5px;top:276.12px;">East</div>
<div class="tree" style="left:44.5px;top:288.58000000000004px;">North</div>
<div class="tree" style="left:44.5px;top:301.04px;">South</div>
<div class="tree" style="left:44.5px;top:313.5px;">West</div>
<div class="tree" style="left:31px;top:325.96000000000004px;">Sections (Building Section)</div>
<div class="tree" style="left:44.5px;top:338.42px;">Section Through Main Stair</div>
<div class="tree" style="left:31px;top:350.88px;">Sections (Wall Section)</div>
<div class="tree" style="left:44.5px;top:363.34000000000003px;">Typical Wall Section</div>
<div class="tree" style="left:31px;top:375.79999999999995px;">Detail Views (Detail)</div>
<div class="tree" style="left:44.5px;top:388.26px;">Detail At Grade</div>
<div class="tree" style="left:44.5px;top:400.72px;">Detail At Parapet</div>
<div class="tree" style="left:31px;top:413.18000000000006px;">Renderings</div>
<div class="tree" style="left:44.5px;top:425.6400000000001px;">From Parking Area_3pm</div>
<div class="tree" style="left:31px;top:438.1px;">Drafting Views (Detail)</div>
<div class="tree" style="left:44.5px;top:450.56000000000006px;">Roofing Termination Detail</div>
<div class="tree" style="left:31px;top:463.02px;">Walkthroughs</div>
<div class="tree" style="left:44.5px;top:475.48px;">Fly into Building</div>
<div class="tree" style="left:31px;top:487.94000000000005px;">Area Plans (Gross Building)</div>
<div class="tree" style="left:44.5px;top:500.4000000000001px;">01 - Entry Level</div>
<div class="tree" style="left:44.5px;top:512.86px;">02 - Floor</div>
<div class="tree" style="left:44.5px;top:525.32px;">03 - Floor</div>
<div class="tree" style="left:29px;top:537.7800000000001px;">Legends</div>
</div>
<div class="a" style="left:152px;top:133px;width:11px;height:543px;background:#f0f0f0"></div>
<div class="a" style="left:152px;top:145px;width:10px;height:378px;background:#cdcdcd"></div>
<svg class="a" style="left:152px;top:134px" width="11" height="10"><path d="M3,6.5 L5.5,4 L8,6.5" stroke="#444" stroke-width="1.3" fill="none"/></svg>
<svg class="a" style="left:152px;top:666px" width="11" height="10"><path d="M3,3.5 L5.5,6 L8,3.5" stroke="#444" stroke-width="1.3" fill="none"/></svg>
<div class="a" style="left:0;top:676px;width:163px;height:11px;background:#f0f0f0"></div>
<div class="a" style="left:12px;top:677px;width:112px;height:9px;background:#cdcdcd"></div>
<svg class="a" style="left:2px;top:676px" width="10" height="11"><path d="M6.5,3 L4,5.5 L6.5,8" stroke="#444" stroke-width="1.3" fill="none"/></svg>
<svg class="a" style="left:142px;top:676px" width="10" height="11"><path d="M3.5,3 L6,5.5 L3.5,8" stroke="#444" stroke-width="1.3" fill="none"/></svg>
<div class="a" style="left:163px;top:119px;width:2px;height:584px;background:#cfcfcf"></div>
<div class="a" style="left:165px;top:119px;width:1115px;height:15px;background:#cdcdcd"></div>
<div class="a" style="left:165px;top:120px;width:97px;height:13px;background:#d3d3d3"></div>
<svg class="a" style="left:166px;top:120px" width="200" height="13">
 <path d="M4,5 L8.5,2.5 L13,5 V9.5 L8.5,12 L4,9.5 Z" fill="#ddd" stroke="#777" stroke-width="1"/><path d="M4,5 L8.5,7.5 L13,5 M8.5,7.5 V12" stroke="#777" fill="none"/>
</svg>
<div class="t" style="left:183px;top:122px;color:#555">From Parking Area</div>
<div class="a" style="left:264px;top:120px;width:93px;height:14px;background:#f2f2f2"></div>
<svg class="a" style="left:264px;top:120px" width="93" height="13">
 <rect x="5.5" y="2.5" width="8" height="8.5" fill="#fff" stroke="#555" stroke-width="1"/><path d="M5.5,6 H9.5 V11 M9.5,4 H13.5" stroke="#555" fill="none"/>
 <path d="M82,3.5 L88,9.5 M88,3.5 L82,9.5" stroke="#222" stroke-width="1.3"/>
</svg>
<div class="t" style="left:283px;top:122px;color:#222;font-weight:bold">01 - Entry Level</div>
<svg class="a" style="left:1269px;top:121px" width="10" height="11"><path d="M2,2.5 h6 M2,4.5 h6 L5,8Z" stroke="#333" fill="#333" stroke-width="0.8"/></svg>
<div class="a" style="left:165px;top:133px;width:1105px;height:557px;background:#fff"></div>
<!-- right vertical scrollbar -->
<div class="a" style="left:1269px;top:133px;width:11px;height:558px;background:#f0f0f0"></div>
<div class="a" style="left:1269.5px;top:407px;width:9.5px;height:11.5px;background:#cacaca"></div>
<svg class="a" style="left:1270px;top:134px" width="10" height="10"><path d="M2.5,6.5 L5,4 L7.5,6.5" stroke="#333" stroke-width="1.3" fill="none"/></svg>
<svg class="a" style="left:1270px;top:680px" width="10" height="10"><path d="M2.5,3.5 L5,6 L7.5,3.5" stroke="#333" stroke-width="1.3" fill="none"/></svg>
<!-- view control bar + h scroll -->
<div class="a" style="left:165px;top:690px;width:1115px;height:12px;background:#efefef"></div>
<div class="a" style="left:165px;top:702px;width:1115px;height:1px;background:#fafafa"></div>
<div class="a" style="left:815px;top:691px;width:11px;height:10px;background:#cdcdcd"></div>
<svg class="a" style="left:1258px;top:691px" width="12" height="11"><path d="M4,3 L6.5,5.5 L4,8" stroke="#333" stroke-width="1.3" fill="none"/></svg>
<svg class="a" style="left:1272px;top:692px" width="8" height="10"><path d="M6,8 h1 M4,8 h1 M6,6 h1" stroke="#aaa"/></svg>
<div class="t" style="left:182px;top:692px;color:#333;">1 : 100</div>
<svg class="a" style="left:210px;top:689px" width="180" height="13">
 <rect x="9" y="2.5" width="10" height="8" fill="#fff" stroke="#444" stroke-width="1.1"/><rect x="9" y="5" width="10" height="3" fill="#fff" stroke="#444" stroke-width="0.8"/>
 <path d="M23.5,5.5 L26,3 H33 V8.5 L30.5,11 H23.5 Z M23.5,5.5 H30.5 V11 M30.5,5.5 L33,3" fill="#fff" stroke="#444" stroke-width="1"/>
 <circle cx="40" cy="5.5" r="2.5" fill="#f0c030" stroke="#c09010" stroke-width="0.8"/><path d="M36,5.5 h-1 M40,1.5 v-1 M37,2.5 l-1,-1 M43,2.5 l1,-1" stroke="#d0a020"/><path d="M42,7.5 L46,11.5 M46,7.5 L42,11.5" stroke="#d22" stroke-width="1.4"/>
 <circle cx="54" cy="5" r="2.8" fill="#fff" stroke="#2a60a0" stroke-width="1.1"/><path d="M51,10 h5" stroke="#2a60a0" stroke-width="1.2"/><path d="M56,7.5 L60,11.5 M60,7.5 L56,11.5" stroke="#d22" stroke-width="1.4"/>
 <path d="M64,8 h3 M67,3 v8 M66,4 h6 v6" stroke="#2a60a0" stroke-width="1.2" fill="none"/><path d="M69,6.5 L73.5,11 M73.5,6.5 L69,11" stroke="#d22" stroke-width="1.4"/>
 <path d="M78,8 h3 M81,3 v8 M80,4 h6 v6" stroke="#2a60a0" stroke-width="1.2" fill="none"/><circle cx="86" cy="8" r="2" fill="#fff" stroke="#2a60a0"/>
 <path d="M92,5 q3,5 6,1 q2,-3 5,0 q-2,4 -5,1" stroke="#444" stroke-width="1.1" fill="none"/>
 <path d="M112,3 a2,2 0 0 1 2,2 q0,2 -2,5 q-2,-3 -2,-5 a2,2 0 0 1 2,-2z" fill="#5aa0e0"/>
 <rect x="121" y="3.5" width="9" height="7" fill="none" stroke="#333" stroke-width="1.1" stroke-dasharray="2 1"/><path d="M126,6 L129,8 L126,10" fill="#333"/>
 <path d="M135,11 V5 L139,3 H144 V11 Z" fill="#d8a040" stroke="#555" stroke-width="0.9"/><path d="M138,11 V6 M141,11 V6" stroke="#c33"/><circle cx="142.5" cy="7" r="2.5" fill="#f5d443"/>
 <path d="M149,3 h10 M149,3 v8" stroke="#444" stroke-width="1.1" stroke-dasharray="1.5 1"/><rect x="154" y="6.5" width="5" height="4.5" rx="1" fill="#555"/>
 <path d="M169.5,3.5 L166.5,6.5 L169.5,9.5" stroke="#333" stroke-width="1.3" fill="none"/>
</svg>
<!-- nav bar -->
<svg class="a" style="left:1243px;top:133px" width="27" height="86">
 <rect x="2.5" y="2.5" width="22" height="80" rx="3" fill="#f3f3f3" stroke="#c4c4c4" stroke-width="1"/>
 <circle cx="19.5" cy="7" r="1.8" fill="#ddd" stroke="#aaa" stroke-width="0.7"/>
 <circle cx="19.5" cy="78" r="1.8" fill="#ddd" stroke="#aaa" stroke-width="0.7"/>
 <path d="M13.5,16.5 a6,6 0 1 0 5.5,8 V16.5Z" fill="none" stroke="#a8a8a8" stroke-width="1.2"/><circle cx="12.8" cy="22.5" r="2.5" fill="none" stroke="#a8a8a8" stroke-width="1"/>
 <text x="14.5" y="30" font-size="5.5" fill="#6a96c8" font-family="Liberation Sans" font-weight="bold">2D</text>
 <path d="M11.5,34.5 h3 l-1.5,1.6z" fill="#888"/>
 <line x1="6" y1="41" x2="21" y2="41" stroke="#d0d0d0"/>
 <rect x="8" y="46" width="7.5" height="6.5" fill="#a7d196"/><circle cx="16.5" cy="52.5" r="2.2" fill="none" stroke="#777" stroke-width="0.9"/><path d="M18,54 l1.8,1.8" stroke="#777" stroke-width="1"/>
 <path d="M11.5,64 h3 l-1.5,1.6z" fill="#888"/>
</svg>

<svg class="a" style="left:165px;top:134px" width="1105" height="556" viewBox="165 134 1105 556" font-family="Liberation Sans"><path d="M586.5,133 H655.5 V342 H586.5 V296 H641 V245 H586.5 Z" fill="#e1e1e1"/>
<line x1="655.5" y1="133" x2="655.5" y2="342" stroke="#333" stroke-width="1" stroke-linecap="butt"/>
<line x1="451.8" y1="133" x2="451.8" y2="466" stroke="#505050" stroke-width="1.15" stroke-dasharray="10 3.2 2.2 3" stroke-linecap="butt"/>
<line x1="451.8" y1="466" x2="451.8" y2="476.3" stroke="#505050" stroke-width="1.15" stroke-linecap="butt"/>
<line x1="510.8" y1="133" x2="510.8" y2="466" stroke="#505050" stroke-width="1.15" stroke-dasharray="10 3.2 2.2 3" stroke-linecap="butt"/>
<line x1="510.8" y1="466" x2="510.8" y2="476.3" stroke="#505050" stroke-width="1.15" stroke-linecap="butt"/>
<line x1="532.3" y1="133" x2="532.3" y2="466" stroke="#505050" stroke-width="1.15" stroke-dasharray="10 3.2 2.2 3" stroke-linecap="butt"/>
<line x1="532.3" y1="466" x2="532.3" y2="476.3" stroke="#505050" stroke-width="1.15" stroke-linecap="butt"/>
<line x1="579.8" y1="133" x2="579.8" y2="466" stroke="#505050" stroke-width="1.15" stroke-dasharray="10 3.2 2.2 3" stroke-linecap="butt"/>
<line x1="579.8" y1="466" x2="579.8" y2="476.3" stroke="#505050" stroke-width="1.15" stroke-linecap="butt"/>
<line x1="630.5" y1="234" x2="630.5" y2="466" stroke="#505050" stroke-width="1.15" stroke-dasharray="10 3.2 2.2 3" stroke-linecap="butt"/>
<line x1="630.5" y1="466" x2="630.5" y2="476.3" stroke="#505050" stroke-width="1.15" stroke-linecap="butt"/>
<line x1="735" y1="310" x2="735" y2="466" stroke="#505050" stroke-width="1.15" stroke-dasharray="10 3.2 2.2 3" stroke-linecap="butt"/>
<line x1="735" y1="466" x2="735" y2="476.3" stroke="#505050" stroke-width="1.15" stroke-linecap="butt"/>
<line x1="787.4" y1="310" x2="787.4" y2="466" stroke="#505050" stroke-width="1.15" stroke-dasharray="10 3.2 2.2 3" stroke-linecap="butt"/>
<line x1="787.4" y1="466" x2="787.4" y2="476.3" stroke="#505050" stroke-width="1.15" stroke-linecap="butt"/>
<line x1="840.1" y1="310" x2="840.1" y2="466" stroke="#505050" stroke-width="1.15" stroke-dasharray="10 3.2 2.2 3" stroke-linecap="butt"/>
<line x1="840.1" y1="466" x2="840.1" y2="476.3" stroke="#505050" stroke-width="1.15" stroke-linecap="butt"/>
<line x1="892.2" y1="310" x2="892.2" y2="466" stroke="#505050" stroke-width="1.15" stroke-dasharray="10 3.2 2.2 3" stroke-linecap="butt"/>
<line x1="892.2" y1="466" x2="892.2" y2="476.3" stroke="#505050" stroke-width="1.15" stroke-linecap="butt"/>
<line x1="979.2" y1="310" x2="979.2" y2="466" stroke="#505050" stroke-width="1.15" stroke-dasharray="10 3.2 2.2 3" stroke-linecap="butt"/>
<line x1="979.2" y1="466" x2="979.2" y2="476.3" stroke="#505050" stroke-width="1.15" stroke-linecap="butt"/>
<line x1="389.3" y1="182.8" x2="605.5" y2="182.8" stroke="#666" stroke-width="1.5" stroke-dasharray="10 3.2 2.2 3" stroke-dashoffset="4" stroke-linecap="butt"/>
<line x1="389.3" y1="235.10000000000002" x2="605.5" y2="235.10000000000002" stroke="#666" stroke-width="1.5" stroke-dasharray="10 3.2 2.2 3" stroke-dashoffset="4" stroke-linecap="butt"/>
<line x1="389.3" y1="251.8" x2="653.5" y2="251.8" stroke="#666" stroke-width="1.5" stroke-dasharray="10 3.2 2.2 3" stroke-dashoffset="4" stroke-linecap="butt"/>
<line x1="389.3" y1="288.3" x2="653.5" y2="288.3" stroke="#666" stroke-width="1.5" stroke-dasharray="10 3.2 2.2 3" stroke-dashoffset="4" stroke-linecap="butt"/>
<line x1="389.3" y1="340.7" x2="1000" y2="340.7" stroke="#666" stroke-width="1.5" stroke-dasharray="10 3.2 2.2 3" stroke-dashoffset="4" stroke-linecap="butt"/>
<line x1="389.3" y1="367.90000000000003" x2="1000" y2="367.90000000000003" stroke="#666" stroke-width="1.5" stroke-dasharray="10 3.2 2.2 3" stroke-dashoffset="4" stroke-linecap="butt"/>
<line x1="389.3" y1="429.1" x2="1000" y2="429.1" stroke="#666" stroke-width="1.5" stroke-dasharray="10 3.2 2.2 3" stroke-dashoffset="4" stroke-linecap="butt"/>
<line x1="446.5" y1="133" x2="446.5" y2="188" stroke="#0a0a0a" stroke-width="1" stroke-linecap="butt"/>
<line x1="444" y1="133" x2="444" y2="186" stroke="#333" stroke-width="1" stroke-dasharray="1.5 1.5" stroke-linecap="butt"/>
<line x1="447" y1="188" x2="447" y2="436" stroke="#0a0a0a" stroke-width="2.6" stroke-linecap="butt"/>
<line x1="492.8" y1="133" x2="492.8" y2="188" stroke="#0a0a0a" stroke-width="2" stroke-linecap="butt"/>
<line x1="514" y1="133" x2="514" y2="364" stroke="#0a0a0a" stroke-width="2.4" stroke-linecap="butt"/>
<line x1="446" y1="188" x2="515" y2="188" stroke="#0a0a0a" stroke-width="2.4" stroke-linecap="butt"/>
<line x1="446" y1="220" x2="515" y2="220" stroke="#0a0a0a" stroke-width="2.4" stroke-linecap="butt"/>
<line x1="469" y1="188" x2="469" y2="205" stroke="#0a0a0a" stroke-width="2" stroke-linecap="butt"/>
<line x1="461" y1="205" x2="470" y2="205" stroke="#0a0a0a" stroke-width="2" stroke-linecap="butt"/>
<line x1="438" y1="271" x2="515" y2="271" stroke="#0a0a0a" stroke-width="2.6" stroke-linecap="butt"/>
<line x1="438" y1="304.7" x2="515" y2="304.7" stroke="#0a0a0a" stroke-width="1.6" stroke-linecap="butt"/>
<line x1="438" y1="237.4" x2="447" y2="237.4" stroke="#0a0a0a" stroke-width="2" stroke-linecap="butt"/>
<line x1="438" y1="253.75" x2="447" y2="253.75" stroke="#0a0a0a" stroke-width="2" stroke-linecap="butt"/>
<line x1="438" y1="288" x2="447" y2="288" stroke="#0a0a0a" stroke-width="2" stroke-linecap="butt"/>
<line x1="438" y1="320.8" x2="447" y2="320.8" stroke="#0a0a0a" stroke-width="2" stroke-linecap="butt"/>
<line x1="438" y1="337.8" x2="447" y2="337.8" stroke="#0a0a0a" stroke-width="2" stroke-linecap="butt"/>
<line x1="438" y1="354.7" x2="447" y2="354.7" stroke="#0a0a0a" stroke-width="2" stroke-linecap="butt"/>
<line x1="438" y1="371.5" x2="447" y2="371.5" stroke="#0a0a0a" stroke-width="2" stroke-linecap="butt"/>
<line x1="438" y1="388.5" x2="447" y2="388.5" stroke="#0a0a0a" stroke-width="2" stroke-linecap="butt"/>
<line x1="438" y1="405" x2="447" y2="405" stroke="#0a0a0a" stroke-width="2" stroke-linecap="butt"/>
<line x1="438" y1="421.7" x2="447" y2="421.7" stroke="#0a0a0a" stroke-width="2" stroke-linecap="butt"/>
<line x1="584.4" y1="133" x2="584.4" y2="245.5" stroke="#0a0a0a" stroke-width="1.8" stroke-linecap="butt"/>
<line x1="586.3" y1="133" x2="586.3" y2="244" stroke="#8a8a8a" stroke-width="1.3" stroke-linecap="butt"/>
<polyline points="584,244.5 641,244.5 641,296.7 588,296.7" stroke="#0a0a0a" stroke-width="2.2" fill="none"/>
<line x1="584.4" y1="296" x2="584.4" y2="343" stroke="#0a0a0a" stroke-width="1.8" stroke-linecap="butt"/>
<line x1="586.3" y1="297.5" x2="586.3" y2="341" stroke="#8a8a8a" stroke-width="1.3" stroke-linecap="butt"/>
<line x1="578.5" y1="156.8" x2="589" y2="156.8" stroke="#777" stroke-width="2" stroke-linecap="butt"/>
<circle cx="579.3" cy="156.8" r="1.2" fill="#333" stroke="none" stroke-width="0"/>
<circle cx="588.5" cy="156.8" r="1.2" fill="#333" stroke="none" stroke-width="0"/>
<rect x="579.5" y="295" width="9" height="3" fill="#ddd" stroke="#666" stroke-width="0.8"/>
<rect x="579.5" y="243" width="9" height="3" fill="#ddd" stroke="#666" stroke-width="0.8"/>
<line x1="584" y1="342.3" x2="983" y2="342.3" stroke="#0a0a0a" stroke-width="2.8" stroke-linecap="butt"/>
<line x1="982.4" y1="341" x2="982.4" y2="437" stroke="#0a0a0a" stroke-width="1.7" stroke-linecap="butt"/>
<line x1="980.5" y1="343.5" x2="980.5" y2="435" stroke="#9a9a9a" stroke-width="1.2" stroke-linecap="butt"/>
<line x1="536" y1="364.8" x2="585" y2="364.8" stroke="#0a0a0a" stroke-width="2.6" stroke-linecap="butt"/>
<line x1="627" y1="365" x2="960" y2="365" stroke="#0a0a0a" stroke-width="2.3" stroke-linecap="butt"/>
<rect x="535.8" y="364" width="2.6" height="71" fill="#9a9a9a" stroke="#333" stroke-width="0.6"/>
<line x1="557" y1="364.8" x2="557" y2="385" stroke="#0a0a0a" stroke-width="2.4" stroke-linecap="butt"/>
<line x1="556" y1="384.6" x2="628" y2="384.6" stroke="#0a0a0a" stroke-width="2.4" stroke-linecap="butt"/>
<rect x="598.5" y="364.8" width="16" height="20" fill="none" stroke="#0a0a0a" stroke-width="2.6"/>
<line x1="604.7" y1="384.6" x2="604.7" y2="436" stroke="#0a0a0a" stroke-width="2.4" stroke-linecap="butt"/>
<line x1="605.7" y1="436" x2="605.7" y2="457" stroke="#222" stroke-width="0.9" stroke-linecap="butt"/>
<line x1="608.5" y1="384.6" x2="608.5" y2="436" stroke="#0a0a0a" stroke-width="2" stroke-linecap="butt"/>
<line x1="605" y1="456.5" x2="613" y2="456.5" stroke="#0a0a0a" stroke-width="2.4" stroke-linecap="butt"/>
<rect x="583.8" y="384" width="2.6" height="51" fill="#9a9a9a" stroke="#333" stroke-width="0.6"/>
<rect x="626.8" y="364" width="2.6" height="71" fill="#9a9a9a" stroke="#222" stroke-width="0.6"/>
<line x1="716.5" y1="365" x2="716.5" y2="444" stroke="#0a0a0a" stroke-width="2.1" stroke-linecap="butt"/>
<line x1="765.8" y1="365" x2="765.8" y2="444" stroke="#0a0a0a" stroke-width="2.1" stroke-linecap="butt"/>
<line x1="862" y1="365" x2="862" y2="444" stroke="#0a0a0a" stroke-width="2.1" stroke-linecap="butt"/>
<line x1="910.5" y1="365" x2="910.5" y2="444" stroke="#0a0a0a" stroke-width="2.1" stroke-linecap="butt"/>
<line x1="958.6" y1="364" x2="958.6" y2="437" stroke="#0a0a0a" stroke-width="1.6" stroke-linecap="butt"/>
<line x1="960.3" y1="366" x2="960.3" y2="435" stroke="#9a9a9a" stroke-width="1" stroke-linecap="butt"/>
<line x1="966" y1="372.6" x2="980" y2="372.6" stroke="#0a0a0a" stroke-width="2.2" stroke-linecap="butt"/>
<line x1="517" y1="372.8" x2="536" y2="372.8" stroke="#0a0a0a" stroke-width="2.2" stroke-linecap="butt"/>
<line x1="446" y1="434.8" x2="513" y2="434.8" stroke="#0a0a0a" stroke-width="2.3" stroke-linecap="butt"/>
<rect x="513.5" y="433.6" width="114" height="3.2" fill="#d8d8d8" stroke="#111" stroke-width="0.9"/>
<line x1="628" y1="434.1" x2="983" y2="434.1" stroke="#888" stroke-width="1" stroke-linecap="butt"/>
<line x1="628" y1="435.4" x2="983" y2="435.4" stroke="#0a0a0a" stroke-width="1.7" stroke-linecap="butt"/>
<line x1="513" y1="366" x2="513" y2="432" stroke="#9a9a9a" stroke-width="3.2" stroke-linecap="butt"/>
<line x1="455.3" y1="435" x2="455.3" y2="444" stroke="#0a0a0a" stroke-width="2" stroke-linecap="butt"/>
<line x1="471.25" y1="435" x2="471.25" y2="444" stroke="#0a0a0a" stroke-width="2" stroke-linecap="butt"/>
<line x1="487.2" y1="435" x2="487.2" y2="444" stroke="#0a0a0a" stroke-width="2" stroke-linecap="butt"/>
<line x1="503.2" y1="435" x2="503.2" y2="444" stroke="#0a0a0a" stroke-width="2" stroke-linecap="butt"/>
<line x1="636.7" y1="435" x2="636.7" y2="444" stroke="#0a0a0a" stroke-width="2" stroke-linecap="butt"/>
<line x1="652.7900000000001" y1="435" x2="652.7900000000001" y2="444" stroke="#0a0a0a" stroke-width="2" stroke-linecap="butt"/>
<line x1="668.88" y1="435" x2="668.88" y2="444" stroke="#0a0a0a" stroke-width="2" stroke-linecap="butt"/>
<line x1="684.97" y1="435" x2="684.97" y2="444" stroke="#0a0a0a" stroke-width="2" stroke-linecap="butt"/>
<line x1="701.0600000000001" y1="435" x2="701.0600000000001" y2="444" stroke="#0a0a0a" stroke-width="2" stroke-linecap="butt"/>
<line x1="717.1500000000001" y1="435" x2="717.1500000000001" y2="444" stroke="#0a0a0a" stroke-width="2" stroke-linecap="butt"/>
<line x1="733.24" y1="435" x2="733.24" y2="444" stroke="#0a0a0a" stroke-width="2" stroke-linecap="butt"/>
<line x1="749.33" y1="435" x2="749.33" y2="444" stroke="#0a0a0a" stroke-width="2" stroke-linecap="butt"/>
<line x1="765.4200000000001" y1="435" x2="765.4200000000001" y2="444" stroke="#0a0a0a" stroke-width="2" stroke-linecap="butt"/>
<line x1="781.51" y1="435" x2="781.51" y2="444" stroke="#0a0a0a" stroke-width="2" stroke-linecap="butt"/>
<line x1="797.6" y1="435" x2="797.6" y2="444" stroke="#0a0a0a" stroke-width="2" stroke-linecap="butt"/>
<line x1="813.69" y1="435" x2="813.69" y2="444" stroke="#0a0a0a" stroke-width="2" stroke-linecap="butt"/>
<line x1="829.78" y1="435" x2="829.78" y2="444" stroke="#0a0a0a" stroke-width="2" stroke-linecap="butt"/>
<line x1="845.87" y1="435" x2="845.87" y2="444" stroke="#0a0a0a" stroke-width="2" stroke-linecap="butt"/>
<line x1="861.96" y1="435" x2="861.96" y2="444" stroke="#0a0a0a" stroke-width="2" stroke-linecap="butt"/>
<line x1="878.0500000000001" y1="435" x2="878.0500000000001" y2="444" stroke="#0a0a0a" stroke-width="2" stroke-linecap="butt"/>
<line x1="894.1400000000001" y1="435" x2="894.1400000000001" y2="444" stroke="#0a0a0a" stroke-width="2" stroke-linecap="butt"/>
<line x1="910.23" y1="435" x2="910.23" y2="444" stroke="#0a0a0a" stroke-width="2" stroke-linecap="butt"/>
<line x1="926.32" y1="435" x2="926.32" y2="444" stroke="#0a0a0a" stroke-width="2" stroke-linecap="butt"/>
<line x1="942.4100000000001" y1="435" x2="942.4100000000001" y2="444" stroke="#0a0a0a" stroke-width="2" stroke-linecap="butt"/>
<circle cx="451.8" cy="481.7" r="5.5" fill="#fff" stroke="#333" stroke-width="1"/>
<text x="451.8" y="483.9" font-size="6" fill="#333" text-anchor="middle">1</text>
<circle cx="510.8" cy="481.7" r="5.5" fill="#fff" stroke="#333" stroke-width="1"/>
<text x="508.5" y="483.9" font-size="5.5" fill="#333" text-anchor="middle">1</text>
<text x="513.1" y="483.9" font-size="5.5" fill="#333" text-anchor="middle">1</text>
<circle cx="510.8" cy="483.4" r="0.55" fill="#333"/>
<circle cx="532.3" cy="481.7" r="5.5" fill="#fff" stroke="#333" stroke-width="1"/>
<text x="532.3" y="483.9" font-size="6" fill="#333" text-anchor="middle">2</text>
<circle cx="579.8" cy="481.7" r="5.5" fill="#fff" stroke="#333" stroke-width="1"/>
<text x="579.8" y="483.9" font-size="6" fill="#333" text-anchor="middle">3</text>
<circle cx="630.5" cy="481.7" r="5.5" fill="#fff" stroke="#333" stroke-width="1"/>
<text x="630.5" y="483.9" font-size="6" fill="#333" text-anchor="middle">4</text>
<circle cx="735" cy="481.7" r="5.5" fill="#fff" stroke="#333" stroke-width="1"/>
<text x="735" y="483.9" font-size="6" fill="#333" text-anchor="middle">6</text>
<circle cx="787.4" cy="481.7" r="5.5" fill="#fff" stroke="#333" stroke-width="1"/>
<text x="787.4" y="483.9" font-size="6" fill="#333" text-anchor="middle">7</text>
<circle cx="840.1" cy="481.7" r="5.5" fill="#fff" stroke="#333" stroke-width="1"/>
<text x="840.1" y="483.9" font-size="6" fill="#333" text-anchor="middle">8</text>
<circle cx="892.2" cy="481.7" r="5.5" fill="#fff" stroke="#333" stroke-width="1"/>
<text x="892.2" y="483.9" font-size="6" fill="#333" text-anchor="middle">9</text>
<circle cx="979.2" cy="481.7" r="5.5" fill="#fff" stroke="#333" stroke-width="1"/>
<text x="979.2" y="483.9" font-size="5.2" fill="#333" text-anchor="middle">10</text>
<circle cx="383.8" cy="182.5" r="5.5" fill="#fff" stroke="#333" stroke-width="1"/>
<text x="383.8" y="184.6" font-size="6" fill="#333" text-anchor="middle">E</text>
<circle cx="383.8" cy="234.8" r="5.5" fill="#fff" stroke="#333" stroke-width="1"/>
<text x="383.8" y="236.9" font-size="6" fill="#333" text-anchor="middle">F</text>
<circle cx="383.8" cy="251.5" r="5.5" fill="#fff" stroke="#333" stroke-width="1"/>
<text x="383.8" y="253.6" font-size="5" fill="#333" text-anchor="middle">F.1</text>
<circle cx="383.8" cy="288" r="5.5" fill="#fff" stroke="#333" stroke-width="1"/>
<text x="383.8" y="290.1" font-size="6" fill="#333" text-anchor="middle">G</text>
<circle cx="383.8" cy="340.4" r="5.5" fill="#fff" stroke="#333" stroke-width="1"/>
<text x="383.8" y="342.5" font-size="6" fill="#333" text-anchor="middle">H</text>
<circle cx="383.8" cy="367.6" r="5.5" fill="#fff" stroke="#333" stroke-width="1"/>
<text x="383.8" y="369.70000000000005" font-size="6" fill="#333" text-anchor="middle">I</text>
<circle cx="383.8" cy="428.8" r="5.5" fill="#fff" stroke="#333" stroke-width="1"/>
<text x="383.8" y="430.90000000000003" font-size="6" fill="#333" text-anchor="middle">J</text>
<line x1="682.8" y1="133" x2="682.8" y2="466" stroke="#44609c" stroke-width="1.6" stroke-dasharray="10 3.2 2.2 3" stroke-linecap="butt"/>
<line x1="682.8" y1="466" x2="682.8" y2="476" stroke="#44609c" stroke-width="1.6" stroke-linecap="butt"/>
<circle cx="682.8" cy="481.7" r="5.6" fill="#e6ecf7" stroke="#3d5a9c" stroke-width="1.6"/>
<text x="682.8" y="483.9" font-size="6" fill="#2d3f70" text-anchor="middle">5</text>
<circle cx="375.4" cy="213" r="5" fill="#fff" stroke="#222" stroke-width="1"/>
<circle cx="1008" cy="204" r="5" fill="#fff" stroke="#222" stroke-width="1"/>
<circle cx="760.5" cy="316.7" r="5" fill="#fff" stroke="#222" stroke-width="1"/>
<circle cx="710.8" cy="495" r="5" fill="#fff" stroke="#222" stroke-width="1"/>
<circle cx="451.8" cy="182.5" r="1.3" fill="#222"/>
<circle cx="451.8" cy="234.8" r="1.3" fill="#222"/>
<circle cx="451.8" cy="251.5" r="1.3" fill="#222"/>
<circle cx="451.8" cy="288" r="1.3" fill="#222"/>
<circle cx="451.8" cy="340.4" r="1.3" fill="#222"/>
<circle cx="510.8" cy="182.5" r="1.3" fill="#222"/>
<circle cx="510.8" cy="234.8" r="1.3" fill="#222"/>
<circle cx="510.8" cy="251.5" r="1.3" fill="#222"/>
<circle cx="510.8" cy="288" r="1.3" fill="#222"/>
<circle cx="510.8" cy="340.4" r="1.3" fill="#222"/>
<circle cx="532.3" cy="182.5" r="1.3" fill="#222"/>
<circle cx="532.3" cy="234.8" r="1.3" fill="#222"/>
<circle cx="532.3" cy="251.5" r="1.3" fill="#222"/>
<circle cx="532.3" cy="288" r="1.3" fill="#222"/>
<circle cx="532.3" cy="340.4" r="1.3" fill="#222"/>
<circle cx="579.8" cy="182.5" r="1.3" fill="#222"/>
<circle cx="579.8" cy="234.8" r="1.3" fill="#222"/>
<circle cx="579.8" cy="251.5" r="1.3" fill="#222"/>
<circle cx="579.8" cy="288" r="1.3" fill="#222"/>
<circle cx="579.8" cy="340.4" r="1.3" fill="#222"/>
<circle cx="630.5" cy="251.5" r="1.3" fill="#222"/>
<circle cx="630.5" cy="288" r="1.3" fill="#222"/>
<circle cx="451.8" cy="367.6" r="1.3" fill="#222"/>
<circle cx="451.8" cy="428.8" r="1.3" fill="#222"/>
<circle cx="510.8" cy="367.6" r="1.3" fill="#222"/>
<circle cx="510.8" cy="428.8" r="1.3" fill="#222"/>
<circle cx="532.3" cy="367.6" r="1.3" fill="#222"/>
<circle cx="532.3" cy="428.8" r="1.3" fill="#222"/>
<circle cx="579.8" cy="367.6" r="1.3" fill="#222"/>
<circle cx="579.8" cy="428.8" r="1.3" fill="#222"/>
<circle cx="630.5" cy="367.6" r="1.3" fill="#222"/>
<circle cx="630.5" cy="428.8" r="1.3" fill="#222"/>
<circle cx="735" cy="367.6" r="1.3" fill="#222"/>
<circle cx="735" cy="428.8" r="1.3" fill="#222"/>
<circle cx="787.4" cy="367.6" r="1.3" fill="#222"/>
<circle cx="787.4" cy="428.8" r="1.3" fill="#222"/>
<circle cx="840.1" cy="367.6" r="1.3" fill="#222"/>
<circle cx="840.1" cy="428.8" r="1.3" fill="#222"/>
<circle cx="892.2" cy="367.6" r="1.3" fill="#222"/>
<circle cx="892.2" cy="428.8" r="1.3" fill="#222"/>
<circle cx="979.2" cy="367.6" r="1.3" fill="#222"/>
<circle cx="979.2" cy="428.8" r="1.3" fill="#222"/>
<polyline points="395,166 395,186 445,186 445,133" stroke="#222" stroke-width="1.1" fill="none" stroke-dasharray="1.6 1.4"/>
<path d="M395,166 Q404,150 412,133" fill="none" stroke="#222" stroke-width="0.9" stroke-dasharray="2 1.6"/>
<circle cx="397.5" cy="167" r="1.5" fill="#111"/>
<circle cx="397.5" cy="182.5" r="1.5" fill="#111"/>
<circle cx="444" cy="166.5" r="1.5" fill="#111"/>
<circle cx="443.5" cy="182.5" r="1.5" fill="#111"/>
<polyline points="535.5,133 535.5,159 558.5,159 558.5,133" stroke="#222" stroke-width="1" fill="none" stroke-dasharray="1.4 1.2"/>
<polyline points="548,133 548,358.5 605.7,358.5 605.7,384" stroke="#222" stroke-width="0.9" fill="none"/>
<rect x="535.5" y="184" width="23" height="67" fill="none" stroke="#333" stroke-width="1" stroke-dasharray="1.4 1.2"/>
<rect x="540" y="176" width="15" height="22" fill="none" stroke="#333" stroke-width="0.9"/>
<line x1="540" y1="178.2" x2="555" y2="178.2" stroke="#777" stroke-width="0.6" stroke-linecap="butt"/>
<line x1="540" y1="180.39999999999998" x2="555" y2="180.39999999999998" stroke="#777" stroke-width="0.6" stroke-linecap="butt"/>
<line x1="540" y1="182.59999999999997" x2="555" y2="182.59999999999997" stroke="#777" stroke-width="0.6" stroke-linecap="butt"/>
<line x1="540" y1="184.79999999999995" x2="555" y2="184.79999999999995" stroke="#777" stroke-width="0.6" stroke-linecap="butt"/>
<line x1="540" y1="186.99999999999994" x2="555" y2="186.99999999999994" stroke="#777" stroke-width="0.6" stroke-linecap="butt"/>
<line x1="540" y1="189.19999999999993" x2="555" y2="189.19999999999993" stroke="#777" stroke-width="0.6" stroke-linecap="butt"/>
<line x1="540" y1="191.39999999999992" x2="555" y2="191.39999999999992" stroke="#777" stroke-width="0.6" stroke-linecap="butt"/>
<line x1="540" y1="193.5999999999999" x2="555" y2="193.5999999999999" stroke="#777" stroke-width="0.6" stroke-linecap="butt"/>
<line x1="540" y1="195.7999999999999" x2="555" y2="195.7999999999999" stroke="#777" stroke-width="0.6" stroke-linecap="butt"/>
<line x1="540" y1="197.9999999999999" x2="555" y2="197.9999999999999" stroke="#777" stroke-width="0.6" stroke-linecap="butt"/>
<line x1="540" y1="200" x2="540" y2="251" stroke="#333" stroke-width="0.9" stroke-linecap="butt"/>
<line x1="555" y1="200" x2="555" y2="251" stroke="#333" stroke-width="0.9" stroke-linecap="butt"/>
<line x1="540" y1="200" x2="555" y2="200" stroke="#888" stroke-width="0.8" stroke-dasharray="1 1.6" stroke-linecap="butt"/>
<line x1="540" y1="203" x2="555" y2="203" stroke="#888" stroke-width="0.8" stroke-dasharray="1 1.6" stroke-linecap="butt"/>
<line x1="540" y1="206" x2="555" y2="206" stroke="#888" stroke-width="0.8" stroke-dasharray="1 1.6" stroke-linecap="butt"/>
<line x1="540" y1="209" x2="555" y2="209" stroke="#888" stroke-width="0.8" stroke-dasharray="1 1.6" stroke-linecap="butt"/>
<line x1="540" y1="212" x2="555" y2="212" stroke="#888" stroke-width="0.8" stroke-dasharray="1 1.6" stroke-linecap="butt"/>
<line x1="540" y1="215" x2="555" y2="215" stroke="#888" stroke-width="0.8" stroke-dasharray="1 1.6" stroke-linecap="butt"/>
<line x1="540" y1="218" x2="555" y2="218" stroke="#888" stroke-width="0.8" stroke-dasharray="1 1.6" stroke-linecap="butt"/>
<line x1="540" y1="221" x2="555" y2="221" stroke="#888" stroke-width="0.8" stroke-dasharray="1 1.6" stroke-linecap="butt"/>
<line x1="540" y1="224" x2="555" y2="224" stroke="#888" stroke-width="0.8" stroke-dasharray="1 1.6" stroke-linecap="butt"/>
<line x1="540" y1="227" x2="555" y2="227" stroke="#888" stroke-width="0.8" stroke-dasharray="1 1.6" stroke-linecap="butt"/>
<line x1="540" y1="230" x2="555" y2="230" stroke="#888" stroke-width="0.8" stroke-dasharray="1 1.6" stroke-linecap="butt"/>
<line x1="540" y1="233" x2="555" y2="233" stroke="#888" stroke-width="0.8" stroke-dasharray="1 1.6" stroke-linecap="butt"/>
<line x1="540" y1="236" x2="555" y2="236" stroke="#888" stroke-width="0.8" stroke-dasharray="1 1.6" stroke-linecap="butt"/>
<line x1="540" y1="239" x2="555" y2="239" stroke="#888" stroke-width="0.8" stroke-dasharray="1 1.6" stroke-linecap="butt"/>
<line x1="540" y1="242" x2="555" y2="242" stroke="#888" stroke-width="0.8" stroke-dasharray="1 1.6" stroke-linecap="butt"/>
<line x1="540" y1="245" x2="555" y2="245" stroke="#888" stroke-width="0.8" stroke-dasharray="1 1.6" stroke-linecap="butt"/>
<line x1="540" y1="248" x2="555" y2="248" stroke="#888" stroke-width="0.8" stroke-dasharray="1 1.6" stroke-linecap="butt"/>
<line x1="540" y1="251" x2="555" y2="251" stroke="#888" stroke-width="0.8" stroke-dasharray="1 1.6" stroke-linecap="butt"/>
<line x1="540" y1="251" x2="555" y2="251" stroke="#111" stroke-width="1.5" stroke-linecap="butt"/>
<rect x="535.5" y="275" width="23" height="67" fill="none" stroke="#333" stroke-width="1" stroke-dasharray="1.4 1.2"/>
<rect x="540" y="328" width="15" height="22" fill="none" stroke="#333" stroke-width="0.9"/>
<line x1="540" y1="330.2" x2="555" y2="330.2" stroke="#777" stroke-width="0.6" stroke-linecap="butt"/>
<line x1="540" y1="332.4" x2="555" y2="332.4" stroke="#777" stroke-width="0.6" stroke-linecap="butt"/>
<line x1="540" y1="334.59999999999997" x2="555" y2="334.59999999999997" stroke="#777" stroke-width="0.6" stroke-linecap="butt"/>
<line x1="540" y1="336.79999999999995" x2="555" y2="336.79999999999995" stroke="#777" stroke-width="0.6" stroke-linecap="butt"/>
<line x1="540" y1="338.99999999999994" x2="555" y2="338.99999999999994" stroke="#777" stroke-width="0.6" stroke-linecap="butt"/>
<line x1="540" y1="341.19999999999993" x2="555" y2="341.19999999999993" stroke="#777" stroke-width="0.6" stroke-linecap="butt"/>
<line x1="540" y1="343.3999999999999" x2="555" y2="343.3999999999999" stroke="#777" stroke-width="0.6" stroke-linecap="butt"/>
<line x1="540" y1="345.5999999999999" x2="555" y2="345.5999999999999" stroke="#777" stroke-width="0.6" stroke-linecap="butt"/>
<line x1="540" y1="347.7999999999999" x2="555" y2="347.7999999999999" stroke="#777" stroke-width="0.6" stroke-linecap="butt"/>
<line x1="540" y1="349.9999999999999" x2="555" y2="349.9999999999999" stroke="#777" stroke-width="0.6" stroke-linecap="butt"/>
<line x1="540" y1="275" x2="540" y2="326" stroke="#333" stroke-width="0.9" stroke-linecap="butt"/>
<line x1="555" y1="275" x2="555" y2="326" stroke="#333" stroke-width="0.9" stroke-linecap="butt"/>
<line x1="540" y1="275" x2="555" y2="275" stroke="#888" stroke-width="0.8" stroke-dasharray="1 1.6" stroke-linecap="butt"/>
<line x1="540" y1="278" x2="555" y2="278" stroke="#888" stroke-width="0.8" stroke-dasharray="1 1.6" stroke-linecap="butt"/>
<line x1="540" y1="281" x2="555" y2="281" stroke="#888" stroke-width="0.8" stroke-dasharray="1 1.6" stroke-linecap="butt"/>
<line x1="540" y1="284" x2="555" y2="284" stroke="#888" stroke-width="0.8" stroke-dasharray="1 1.6" stroke-linecap="butt"/>
<line x1="540" y1="287" x2="555" y2="287" stroke="#888" stroke-width="0.8" stroke-dasharray="1 1.6" stroke-linecap="butt"/>
<line x1="540" y1="290" x2="555" y2="290" stroke="#888" stroke-width="0.8" stroke-dasharray="1 1.6" stroke-linecap="butt"/>
<line x1="540" y1="293" x2="555" y2="293" stroke="#888" stroke-width="0.8" stroke-dasharray="1 1.6" stroke-linecap="butt"/>
<line x1="540" y1="296" x2="555" y2="296" stroke="#888" stroke-width="0.8" stroke-dasharray="1 1.6" stroke-linecap="butt"/>
<line x1="540" y1="299" x2="555" y2="299" stroke="#888" stroke-width="0.8" stroke-dasharray="1 1.6" stroke-linecap="butt"/>
<line x1="540" y1="302" x2="555" y2="302" stroke="#888" stroke-width="0.8" stroke-dasharray="1 1.6" stroke-linecap="butt"/>
<line x1="540" y1="305" x2="555" y2="305" stroke="#888" stroke-width="0.8" stroke-dasharray="1 1.6" stroke-linecap="butt"/>
<line x1="540" y1="308" x2="555" y2="308" stroke="#888" stroke-width="0.8" stroke-dasharray="1 1.6" stroke-linecap="butt"/>
<line x1="540" y1="311" x2="555" y2="311" stroke="#888" stroke-width="0.8" stroke-dasharray="1 1.6" stroke-linecap="butt"/>
<line x1="540" y1="314" x2="555" y2="314" stroke="#888" stroke-width="0.8" stroke-dasharray="1 1.6" stroke-linecap="butt"/>
<line x1="540" y1="317" x2="555" y2="317" stroke="#888" stroke-width="0.8" stroke-dasharray="1 1.6" stroke-linecap="butt"/>
<line x1="540" y1="320" x2="555" y2="320" stroke="#888" stroke-width="0.8" stroke-dasharray="1 1.6" stroke-linecap="butt"/>
<line x1="540" y1="323" x2="555" y2="323" stroke="#888" stroke-width="0.8" stroke-dasharray="1 1.6" stroke-linecap="butt"/>
<line x1="540" y1="326" x2="555" y2="326" stroke="#888" stroke-width="0.8" stroke-dasharray="1 1.6" stroke-linecap="butt"/>
<line x1="540" y1="275" x2="555" y2="275" stroke="#111" stroke-width="1.2" stroke-linecap="butt"/>
<rect x="516" y="393" width="10" height="20" fill="none" stroke="#333" stroke-width="0.9"/>
<line x1="516" y1="395.2" x2="526" y2="395.2" stroke="#777" stroke-width="0.6" stroke-linecap="butt"/>
<line x1="516" y1="397.4" x2="526" y2="397.4" stroke="#777" stroke-width="0.6" stroke-linecap="butt"/>
<line x1="516" y1="399.59999999999997" x2="526" y2="399.59999999999997" stroke="#777" stroke-width="0.6" stroke-linecap="butt"/>
<line x1="516" y1="401.79999999999995" x2="526" y2="401.79999999999995" stroke="#777" stroke-width="0.6" stroke-linecap="butt"/>
<line x1="516" y1="403.99999999999994" x2="526" y2="403.99999999999994" stroke="#777" stroke-width="0.6" stroke-linecap="butt"/>
<line x1="516" y1="406.19999999999993" x2="526" y2="406.19999999999993" stroke="#777" stroke-width="0.6" stroke-linecap="butt"/>
<line x1="516" y1="408.3999999999999" x2="526" y2="408.3999999999999" stroke="#777" stroke-width="0.6" stroke-linecap="butt"/>
<line x1="516" y1="410.5999999999999" x2="526" y2="410.5999999999999" stroke="#777" stroke-width="0.6" stroke-linecap="butt"/>
<line x1="516" y1="412.7999999999999" x2="526" y2="412.7999999999999" stroke="#777" stroke-width="0.6" stroke-linecap="butt"/>
<line x1="516" y1="413" x2="516" y2="432" stroke="#333" stroke-width="0.9" stroke-linecap="butt"/>
<line x1="536" y1="413" x2="536" y2="432" stroke="#333" stroke-width="0.9" stroke-linecap="butt"/>
<line x1="516" y1="413" x2="536" y2="413" stroke="#888" stroke-width="0.8" stroke-dasharray="1 1.6" stroke-linecap="butt"/>
<line x1="516" y1="415.6" x2="536" y2="415.6" stroke="#888" stroke-width="0.8" stroke-dasharray="1 1.6" stroke-linecap="butt"/>
<line x1="516" y1="418.20000000000005" x2="536" y2="418.20000000000005" stroke="#888" stroke-width="0.8" stroke-dasharray="1 1.6" stroke-linecap="butt"/>
<line x1="516" y1="420.80000000000007" x2="536" y2="420.80000000000007" stroke="#888" stroke-width="0.8" stroke-dasharray="1 1.6" stroke-linecap="butt"/>
<line x1="516" y1="423.4000000000001" x2="536" y2="423.4000000000001" stroke="#888" stroke-width="0.8" stroke-dasharray="1 1.6" stroke-linecap="butt"/>
<line x1="516" y1="426.0000000000001" x2="536" y2="426.0000000000001" stroke="#888" stroke-width="0.8" stroke-dasharray="1 1.6" stroke-linecap="butt"/>
<line x1="516" y1="428.60000000000014" x2="536" y2="428.60000000000014" stroke="#888" stroke-width="0.8" stroke-dasharray="1 1.6" stroke-linecap="butt"/>
<line x1="516" y1="431.20000000000016" x2="536" y2="431.20000000000016" stroke="#888" stroke-width="0.8" stroke-dasharray="1 1.6" stroke-linecap="butt"/>
<line x1="526" y1="393" x2="526" y2="420" stroke="#111" stroke-width="1.5" stroke-linecap="butt"/>
<line x1="531" y1="396" x2="531" y2="426" stroke="#333" stroke-width="0.9" stroke-dasharray="1.2 1.2" stroke-linecap="butt"/>
<rect x="960" y="390" width="10" height="20" fill="none" stroke="#333" stroke-width="0.9"/>
<line x1="960" y1="392.2" x2="970" y2="392.2" stroke="#777" stroke-width="0.6" stroke-linecap="butt"/>
<line x1="960" y1="394.4" x2="970" y2="394.4" stroke="#777" stroke-width="0.6" stroke-linecap="butt"/>
<line x1="960" y1="396.59999999999997" x2="970" y2="396.59999999999997" stroke="#777" stroke-width="0.6" stroke-linecap="butt"/>
<line x1="960" y1="398.79999999999995" x2="970" y2="398.79999999999995" stroke="#777" stroke-width="0.6" stroke-linecap="butt"/>
<line x1="960" y1="400.99999999999994" x2="970" y2="400.99999999999994" stroke="#777" stroke-width="0.6" stroke-linecap="butt"/>
<line x1="960" y1="403.19999999999993" x2="970" y2="403.19999999999993" stroke="#777" stroke-width="0.6" stroke-linecap="butt"/>
<line x1="960" y1="405.3999999999999" x2="970" y2="405.3999999999999" stroke="#777" stroke-width="0.6" stroke-linecap="butt"/>
<line x1="960" y1="407.5999999999999" x2="970" y2="407.5999999999999" stroke="#777" stroke-width="0.6" stroke-linecap="butt"/>
<line x1="960" y1="409.7999999999999" x2="970" y2="409.7999999999999" stroke="#777" stroke-width="0.6" stroke-linecap="butt"/>
<line x1="958" y1="410" x2="958" y2="433" stroke="#333" stroke-width="0.9" stroke-linecap="butt"/>
<line x1="981" y1="410" x2="981" y2="433" stroke="#333" stroke-width="0.9" stroke-linecap="butt"/>
<line x1="958" y1="410" x2="981" y2="410" stroke="#888" stroke-width="0.8" stroke-dasharray="1 1.6" stroke-linecap="butt"/>
<line x1="958" y1="412.6" x2="981" y2="412.6" stroke="#888" stroke-width="0.8" stroke-dasharray="1 1.6" stroke-linecap="butt"/>
<line x1="958" y1="415.20000000000005" x2="981" y2="415.20000000000005" stroke="#888" stroke-width="0.8" stroke-dasharray="1 1.6" stroke-linecap="butt"/>
<line x1="958" y1="417.80000000000007" x2="981" y2="417.80000000000007" stroke="#888" stroke-width="0.8" stroke-dasharray="1 1.6" stroke-linecap="butt"/>
<line x1="958" y1="420.4000000000001" x2="981" y2="420.4000000000001" stroke="#888" stroke-width="0.8" stroke-dasharray="1 1.6" stroke-linecap="butt"/>
<line x1="958" y1="423.0000000000001" x2="981" y2="423.0000000000001" stroke="#888" stroke-width="0.8" stroke-dasharray="1 1.6" stroke-linecap="butt"/>
<line x1="958" y1="425.60000000000014" x2="981" y2="425.60000000000014" stroke="#888" stroke-width="0.8" stroke-dasharray="1 1.6" stroke-linecap="butt"/>
<line x1="958" y1="428.20000000000016" x2="981" y2="428.20000000000016" stroke="#888" stroke-width="0.8" stroke-dasharray="1 1.6" stroke-linecap="butt"/>
<line x1="958" y1="430.8000000000002" x2="981" y2="430.8000000000002" stroke="#888" stroke-width="0.8" stroke-dasharray="1 1.6" stroke-linecap="butt"/>
<line x1="971" y1="390" x2="971" y2="418" stroke="#111" stroke-width="1.5" stroke-linecap="butt"/>
<line x1="977" y1="392" x2="977" y2="428" stroke="#333" stroke-width="0.9" stroke-dasharray="1.2 1.2" stroke-linecap="butt"/>
<rect x="958" y="430" width="24" height="5" fill="none" stroke="#222" stroke-width="1" stroke-dasharray="1.3 1"/>
<rect x="514.5" y="430" width="22" height="5" fill="none" stroke="#222" stroke-width="1" stroke-dasharray="1.3 1"/>
<text x="569" y="141.8" font-size="3.9" fill="#666" text-anchor="middle">Lobby</text>
<rect x="562.5" y="144.5" width="13" height="5" fill="#fff" stroke="#333" stroke-width="0.9"/>
<line x1="566" y1="147" x2="572" y2="147" stroke="#bbb" stroke-width="1" stroke-linecap="butt"/>
<text x="460" y="198.8" font-size="3.9" fill="#666" text-anchor="middle">Janitor</text>
<rect x="454.0" y="201.5" width="12" height="5" fill="#fff" stroke="#333" stroke-width="0.9"/>
<line x1="457" y1="204" x2="463" y2="204" stroke="#bbb" stroke-width="1" stroke-linecap="butt"/>
<text x="489" y="198.3" font-size="3.9" fill="#666" text-anchor="middle">Electrical</text>
<rect x="482.5" y="201.0" width="13" height="5" fill="#fff" stroke="#333" stroke-width="0.9"/>
<line x1="486" y1="203.5" x2="492" y2="203.5" stroke="#bbb" stroke-width="1" stroke-linecap="butt"/>
<text x="477" y="242.3" font-size="3.9" fill="#666" text-anchor="middle">Instruction</text>
<rect x="470.5" y="245.0" width="13" height="5" fill="#fff" stroke="#333" stroke-width="0.9"/>
<line x1="474" y1="247.5" x2="480" y2="247.5" stroke="#bbb" stroke-width="1" stroke-linecap="butt"/>
<text x="479" y="285.3" font-size="3.9" fill="#666" text-anchor="middle">Conference</text>
<rect x="472.0" y="288.0" width="14" height="5" fill="#fff" stroke="#333" stroke-width="0.9"/>
<line x1="476" y1="290.5" x2="482" y2="290.5" stroke="#bbb" stroke-width="1" stroke-linecap="butt"/>
<text x="608" y="264.3" font-size="3.9" fill="#666" text-anchor="middle">Lounge</text>
<rect x="601.0" y="267.0" width="14" height="5" fill="#fff" stroke="#333" stroke-width="0.9"/>
<line x1="605" y1="269.5" x2="611" y2="269.5" stroke="#bbb" stroke-width="1" stroke-linecap="butt"/>
<text x="481" y="356.3" font-size="3.9" fill="#666" text-anchor="middle">Instruction</text>
<rect x="474.5" y="359.0" width="13" height="5" fill="#fff" stroke="#333" stroke-width="0.9"/>
<line x1="478" y1="361.5" x2="484" y2="361.5" stroke="#bbb" stroke-width="1" stroke-linecap="butt"/>
<text x="702" y="350.3" font-size="3.9" fill="#666" text-anchor="middle">Corridor</text>
<rect x="695.0" y="353.0" width="14" height="5" fill="#fff" stroke="#333" stroke-width="0.9"/>
<line x1="699" y1="355.5" x2="705" y2="355.5" stroke="#bbb" stroke-width="1" stroke-linecap="butt"/>
<text x="524" y="381.3" font-size="3.9" fill="#666" text-anchor="middle">Exit</text>
<rect x="518.0" y="384.0" width="12" height="5" fill="#fff" stroke="#333" stroke-width="0.9"/>
<line x1="521" y1="386.5" x2="527" y2="386.5" stroke="#bbb" stroke-width="1" stroke-linecap="butt"/>
<text x="560" y="401.3" font-size="3.9" fill="#666" text-anchor="middle">Lounge</text>
<rect x="553.0" y="404.0" width="14" height="5" fill="#fff" stroke="#333" stroke-width="0.9"/>
<line x1="557" y1="406.5" x2="563" y2="406.5" stroke="#bbb" stroke-width="1" stroke-linecap="butt"/>
<text x="594.5" y="401.3" font-size="3.9" fill="#666" text-anchor="middle">Men</text>
<rect x="588.0" y="404.0" width="13" height="5" fill="#fff" stroke="#333" stroke-width="0.9"/>
<line x1="591.5" y1="406.5" x2="597.5" y2="406.5" stroke="#bbb" stroke-width="1" stroke-linecap="butt"/>
<text x="617.5" y="401.3" font-size="3.9" fill="#666" text-anchor="middle">Women</text>
<rect x="611.0" y="404.0" width="13" height="5" fill="#fff" stroke="#333" stroke-width="0.9"/>
<line x1="614.5" y1="406.5" x2="620.5" y2="406.5" stroke="#bbb" stroke-width="1" stroke-linecap="butt"/>
<text x="570" y="371.3" font-size="3.9" fill="#666" text-anchor="middle">Storage</text>
<rect x="563.5" y="374.0" width="13" height="5" fill="#fff" stroke="#333" stroke-width="0.9"/>
<line x1="567" y1="376.5" x2="573" y2="376.5" stroke="#bbb" stroke-width="1" stroke-linecap="butt"/>
<text x="673" y="395.3" font-size="3.9" fill="#666" text-anchor="middle">Instruction</text>
<rect x="666.5" y="398.0" width="13" height="5" fill="#fff" stroke="#333" stroke-width="0.9"/>
<line x1="670" y1="400.5" x2="676" y2="400.5" stroke="#bbb" stroke-width="1" stroke-linecap="butt"/>
<text x="739" y="395.3" font-size="3.9" fill="#666" text-anchor="middle">Instruction</text>
<rect x="732.5" y="398.0" width="13" height="5" fill="#fff" stroke="#333" stroke-width="0.9"/>
<line x1="736" y1="400.5" x2="742" y2="400.5" stroke="#bbb" stroke-width="1" stroke-linecap="butt"/>
<text x="813" y="395.3" font-size="3.9" fill="#666" text-anchor="middle">Instruction</text>
<rect x="806.0" y="398.0" width="14" height="5" fill="#fff" stroke="#333" stroke-width="0.9"/>
<line x1="810" y1="400.5" x2="816" y2="400.5" stroke="#bbb" stroke-width="1" stroke-linecap="butt"/>
<text x="889" y="395.3" font-size="3.9" fill="#666" text-anchor="middle">Instruction</text>
<rect x="882.0" y="398.0" width="14" height="5" fill="#fff" stroke="#333" stroke-width="0.9"/>
<line x1="886" y1="400.5" x2="892" y2="400.5" stroke="#bbb" stroke-width="1" stroke-linecap="butt"/>
<text x="932" y="395.8" font-size="3.9" fill="#666" text-anchor="middle">Conference</text>
<rect x="925.0" y="398.5" width="14" height="5" fill="#fff" stroke="#333" stroke-width="0.9"/>
<line x1="929" y1="401" x2="935" y2="401" stroke="#bbb" stroke-width="1" stroke-linecap="butt"/>
<text x="971" y="381.3" font-size="3.9" fill="#666" text-anchor="middle">Exit</text>
<rect x="965.0" y="384.0" width="12" height="5" fill="#fff" stroke="#333" stroke-width="0.9"/>
<line x1="968" y1="386.5" x2="974" y2="386.5" stroke="#bbb" stroke-width="1" stroke-linecap="butt"/>
<line x1="715.3" y1="365" x2="715.3" y2="373.5" stroke="#111" stroke-width="1.1" stroke-linecap="butt"/>
<path d="M715.3,373.5 Q707.65,372.65 706.8,365" fill="none" stroke="#222" stroke-width="0.8"/>
<line x1="717.7" y1="365" x2="717.7" y2="373.5" stroke="#111" stroke-width="1.1" stroke-linecap="butt"/>
<path d="M717.7,373.5 Q725.35,372.65 726.2,365" fill="none" stroke="#222" stroke-width="0.8"/>
<ellipse cx="712.0" cy="365" rx="4" ry="2.6" fill="#fff" stroke="#333" stroke-width="0.8"/><line x1="710.2" y1="365" x2="713.8" y2="365" stroke="#999" stroke-width="0.9"/>
<ellipse cx="721.5" cy="365" rx="4" ry="2.6" fill="#fff" stroke="#333" stroke-width="0.8"/><line x1="719.7" y1="365" x2="723.3" y2="365" stroke="#999" stroke-width="0.9"/>
<line x1="764.5999999999999" y1="365" x2="764.5999999999999" y2="373.5" stroke="#111" stroke-width="1.1" stroke-linecap="butt"/>
<path d="M764.5999999999999,373.5 Q756.9499999999999,372.65 756.0999999999999,365" fill="none" stroke="#222" stroke-width="0.8"/>
<line x1="767.0" y1="365" x2="767.0" y2="373.5" stroke="#111" stroke-width="1.1" stroke-linecap="butt"/>
<path d="M767.0,373.5 Q774.65,372.65 775.5,365" fill="none" stroke="#222" stroke-width="0.8"/>
<ellipse cx="761.3" cy="365" rx="4" ry="2.6" fill="#fff" stroke="#333" stroke-width="0.8"/><line x1="759.5" y1="365" x2="763.0999999999999" y2="365" stroke="#999" stroke-width="0.9"/>
<ellipse cx="770.8" cy="365" rx="4" ry="2.6" fill="#fff" stroke="#333" stroke-width="0.8"/><line x1="769.0" y1="365" x2="772.5999999999999" y2="365" stroke="#999" stroke-width="0.9"/>
<line x1="860.8" y1="365" x2="860.8" y2="373.5" stroke="#111" stroke-width="1.1" stroke-linecap="butt"/>
<path d="M860.8,373.5 Q853.15,372.65 852.3,365" fill="none" stroke="#222" stroke-width="0.8"/>
<line x1="863.2" y1="365" x2="863.2" y2="373.5" stroke="#111" stroke-width="1.1" stroke-linecap="butt"/>
<path d="M863.2,373.5 Q870.85,372.65 871.7,365" fill="none" stroke="#222" stroke-width="0.8"/>
<ellipse cx="857.5" cy="365" rx="4" ry="2.6" fill="#fff" stroke="#333" stroke-width="0.8"/><line x1="855.7" y1="365" x2="859.3" y2="365" stroke="#999" stroke-width="0.9"/>
<ellipse cx="867" cy="365" rx="4" ry="2.6" fill="#fff" stroke="#333" stroke-width="0.8"/><line x1="865.2" y1="365" x2="868.8" y2="365" stroke="#999" stroke-width="0.9"/>
<line x1="909.3" y1="365" x2="909.3" y2="373.5" stroke="#111" stroke-width="1.1" stroke-linecap="butt"/>
<path d="M909.3,373.5 Q901.65,372.65 900.8,365" fill="none" stroke="#222" stroke-width="0.8"/>
<line x1="911.7" y1="365" x2="911.7" y2="373.5" stroke="#111" stroke-width="1.1" stroke-linecap="butt"/>
<path d="M911.7,373.5 Q919.35,372.65 920.2,365" fill="none" stroke="#222" stroke-width="0.8"/>
<ellipse cx="906.0" cy="365" rx="4" ry="2.6" fill="#fff" stroke="#333" stroke-width="0.8"/><line x1="904.2" y1="365" x2="907.8" y2="365" stroke="#999" stroke-width="0.9"/>
<ellipse cx="915.5" cy="365" rx="4" ry="2.6" fill="#fff" stroke="#333" stroke-width="0.8"/><line x1="913.7" y1="365" x2="917.3" y2="365" stroke="#999" stroke-width="0.9"/>
<line x1="632" y1="365" x2="632" y2="373" stroke="#111" stroke-width="1.1" stroke-linecap="butt"/>
<path d="M632,373 Q639.2,372.2 640,365" fill="none" stroke="#222" stroke-width="0.8"/>
<ellipse cx="636" cy="365" rx="4" ry="2.6" fill="#fff" stroke="#333" stroke-width="0.8"/><line x1="634.2" y1="365" x2="637.8" y2="365" stroke="#999" stroke-width="0.9"/>
<line x1="959.5" y1="372.6" x2="959.5" y2="380.1" stroke="#111" stroke-width="1.1" stroke-linecap="butt"/>
<path d="M959.5,380.1 Q966.25,379.35 967.0,372.6" fill="none" stroke="#222" stroke-width="0.8"/>
<ellipse cx="963.5" cy="372.6" rx="4" ry="2.6" fill="#fff" stroke="#333" stroke-width="0.8"/><line x1="961.7" y1="372.6" x2="965.3" y2="372.6" stroke="#999" stroke-width="0.9"/>
<line x1="981" y1="373" x2="981" y2="381" stroke="#111" stroke-width="1.1" stroke-linecap="butt"/>
<path d="M981,381 Q988.2,380.2 989,373" fill="none" stroke="#222" stroke-width="0.8"/>
<line x1="981" y1="381" x2="981" y2="373" stroke="#111" stroke-width="1.1" stroke-linecap="butt"/>
<path d="M981,373 Q988.2,373.8 989,381" fill="none" stroke="#222" stroke-width="0.8"/>
<ellipse cx="987" cy="377" rx="4" ry="2.6" fill="#fff" stroke="#333" stroke-width="0.8"/><line x1="985.2" y1="377" x2="988.8" y2="377" stroke="#999" stroke-width="0.9"/>
<line x1="514" y1="270.5" x2="514" y2="262.0" stroke="#111" stroke-width="1.1" stroke-linecap="butt"/>
<path d="M514,262.0 Q506.35,262.85 505.5,270.5" fill="none" stroke="#222" stroke-width="0.8"/>
<ellipse cx="518.5" cy="265" rx="4" ry="2.6" fill="#fff" stroke="#333" stroke-width="0.8"/><line x1="516.7" y1="265" x2="520.3" y2="265" stroke="#999" stroke-width="0.9"/>
<line x1="514" y1="304.5" x2="514" y2="296.0" stroke="#111" stroke-width="1.1" stroke-linecap="butt"/>
<path d="M514,296.0 Q506.35,296.85 505.5,304.5" fill="none" stroke="#222" stroke-width="0.8"/>
<ellipse cx="518.5" cy="299" rx="4" ry="2.6" fill="#fff" stroke="#333" stroke-width="0.8"/><line x1="516.7" y1="299" x2="520.3" y2="299" stroke="#999" stroke-width="0.9"/>
<line x1="514" y1="320.5" x2="514" y2="312.0" stroke="#111" stroke-width="1.1" stroke-linecap="butt"/>
<path d="M514,312.0 Q506.35,312.85 505.5,320.5" fill="none" stroke="#222" stroke-width="0.8"/>
<ellipse cx="518.5" cy="314.5" rx="4" ry="2.6" fill="#fff" stroke="#333" stroke-width="0.8"/><line x1="516.7" y1="314.5" x2="520.3" y2="314.5" stroke="#999" stroke-width="0.9"/>
<line x1="505" y1="270.6" x2="514" y2="270.6" stroke="#0a0a0a" stroke-width="2.6" stroke-linecap="butt"/>
<line x1="456" y1="186" x2="456" y2="179" stroke="#111" stroke-width="1.1" stroke-linecap="butt"/>
<path d="M456,179 Q462.3,179.7 463,186" fill="none" stroke="#222" stroke-width="0.8"/>
<line x1="466" y1="186" x2="466" y2="179" stroke="#111" stroke-width="1.1" stroke-linecap="butt"/>
<path d="M466,179 Q459.7,179.7 459,186" fill="none" stroke="#222" stroke-width="0.8"/>
<ellipse cx="461" cy="188" rx="4" ry="2.6" fill="#fff" stroke="#333" stroke-width="0.8"/><line x1="459.2" y1="188" x2="462.8" y2="188" stroke="#999" stroke-width="0.9"/>
<line x1="470" y1="203" x2="470" y2="210" stroke="#111" stroke-width="1.1" stroke-linecap="butt"/>
<path d="M470,210 Q476.3,209.3 477,203" fill="none" stroke="#222" stroke-width="0.8"/>
<ellipse cx="468" cy="211" rx="4" ry="2.6" fill="#fff" stroke="#333" stroke-width="0.8"/><line x1="466.2" y1="211" x2="469.8" y2="211" stroke="#999" stroke-width="0.9"/>
<line x1="514" y1="203" x2="514" y2="210" stroke="#111" stroke-width="1.1" stroke-linecap="butt"/>
<path d="M514,210 Q507.7,209.3 507,203" fill="none" stroke="#222" stroke-width="0.8"/>
<ellipse cx="509" cy="211" rx="4" ry="2.6" fill="#fff" stroke="#333" stroke-width="0.8"/><line x1="507.2" y1="211" x2="510.8" y2="211" stroke="#999" stroke-width="0.9"/>
<line x1="598" y1="245" x2="598" y2="238" stroke="#111" stroke-width="1.1" stroke-linecap="butt"/>
<path d="M598,238 Q604.3,238.7 605,245" fill="none" stroke="#222" stroke-width="0.8"/>
<line x1="612" y1="245" x2="612" y2="238" stroke="#111" stroke-width="1.1" stroke-linecap="butt"/>
<path d="M612,238 Q605.7,238.7 605,245" fill="none" stroke="#222" stroke-width="0.8"/>
<ellipse cx="605" cy="246" rx="4" ry="2.6" fill="#fff" stroke="#333" stroke-width="0.8"/><line x1="603.2" y1="246" x2="606.8" y2="246" stroke="#999" stroke-width="0.9"/>
<line x1="514" y1="370" x2="514" y2="378" stroke="#111" stroke-width="1.1" stroke-linecap="butt"/>
<path d="M514,378 Q521.2,377.2 522,370" fill="none" stroke="#222" stroke-width="0.8"/>
<ellipse cx="518" cy="371" rx="4" ry="2.6" fill="#fff" stroke="#333" stroke-width="0.8"/><line x1="516.2" y1="371" x2="519.8" y2="371" stroke="#999" stroke-width="0.9"/>
<line x1="557" y1="364.6" x2="557" y2="373.1" stroke="#111" stroke-width="1.1" stroke-linecap="butt"/>
<path d="M557,373.1 Q549.35,372.25 548.5,364.6" fill="none" stroke="#222" stroke-width="0.8"/>
<line x1="559" y1="364.6" x2="559" y2="373.1" stroke="#111" stroke-width="1.1" stroke-linecap="butt"/>
<path d="M559,373.1 Q566.65,372.25 567.5,364.6" fill="none" stroke="#222" stroke-width="0.8"/>
<ellipse cx="552" cy="364" rx="4" ry="2.6" fill="#fff" stroke="#333" stroke-width="0.8"/><line x1="550.2" y1="364" x2="553.8" y2="364" stroke="#999" stroke-width="0.9"/>
<ellipse cx="564" cy="364" rx="4" ry="2.6" fill="#fff" stroke="#333" stroke-width="0.8"/><line x1="562.2" y1="364" x2="565.8" y2="364" stroke="#999" stroke-width="0.9"/>
<line x1="585" y1="384.7" x2="585" y2="392.7" stroke="#111" stroke-width="1.1" stroke-linecap="butt"/>
<path d="M585,392.7 Q592.2,391.9 593,384.7" fill="none" stroke="#222" stroke-width="0.8"/>
<ellipse cx="589" cy="384" rx="4" ry="2.6" fill="#fff" stroke="#333" stroke-width="0.8"/><line x1="587.2" y1="384" x2="590.8" y2="384" stroke="#999" stroke-width="0.9"/>
<line x1="627.5" y1="384.7" x2="627.5" y2="392.7" stroke="#111" stroke-width="1.1" stroke-linecap="butt"/>
<path d="M627.5,392.7 Q620.3,391.9 619.5,384.7" fill="none" stroke="#222" stroke-width="0.8"/>
<ellipse cx="623" cy="384" rx="4" ry="2.6" fill="#fff" stroke="#333" stroke-width="0.8"/><line x1="621.2" y1="384" x2="624.8" y2="384" stroke="#999" stroke-width="0.9"/>
<circle cx="375.4" cy="213" r="5" fill="#fff" stroke="#222" stroke-width="1"/>
<path d="M379.4,210 L382.9,213 L379.4,216Z" fill="#111"/>
<circle cx="375.4" cy="213" r="4.3" fill="#fff" stroke="none" stroke-width="0"/>
<circle cx="1008" cy="204" r="5" fill="#fff" stroke="#222" stroke-width="1"/>
<path d="M1004,201 L1000.5,204 L1004,207Z" fill="#111"/>
<circle cx="1008" cy="204" r="4.3" fill="#fff" stroke="none" stroke-width="0"/>
<circle cx="760.5" cy="316.7" r="5" fill="#fff" stroke="#222" stroke-width="1"/>
<path d="M757.5,320.7 L760.5,324.2 L763.5,320.7Z" fill="#111"/>
<circle cx="760.5" cy="316.7" r="4.3" fill="#fff" stroke="none" stroke-width="0"/>
<circle cx="711" cy="496.3" r="5" fill="#fff" stroke="#222" stroke-width="1"/>
<path d="M708,492.3 L711,488.8 L714,492.3Z" fill="#111"/>
<circle cx="711" cy="496.3" r="4.3" fill="#fff" stroke="none" stroke-width="0"/>
<path d="M833.5,372 L833.5,384 L836.3,381.3 L838.5,386 L840.5,385 L838.3,380.5 L842,380.5 Z" fill="#fff" stroke="#777" stroke-width="0.8"/>
<path d="M380.5,134.6 Q383.8,136.2 387,134.6" fill="none" stroke="#333" stroke-width="1"/></svg>
<div class="a" style="left:0;top:703px;width:1280px;height:17px;background:#cbcbcb"></div>
<svg class="a" style="left:590px;top:703px" width="690" height="17">
 <path d="M8,13 V9 a3,3 0 0 1 6,0 V13" fill="none" stroke="#3a6fa8" stroke-width="1.2"/><circle cx="11" cy="7" r="2.5" fill="#7ac060" stroke="#3a6fa8" stroke-width="0.8"/><rect x="6" y="9" width="3.5" height="5" fill="#fff" stroke="#3a6fa8" stroke-width="0.9"/><rect x="12.5" y="9" width="3.5" height="5" fill="#fff" stroke="#3a6fa8" stroke-width="0.9"/>
 <rect x="23.5" y="2.5" width="136" height="13" fill="#fff" stroke="#e2e2e2"/>
 <path d="M151,7.5 L153.5,10 L156,7.5" stroke="#999" fill="none"/>
 <path d="M166,13 L171,5 H174 L169,13 Z" fill="#bbb" stroke="#888" stroke-width="0.7"/><text x="174" y="12.5" font-size="9" fill="#222" font-family="Liberation Sans">:0</text>
 <rect x="201" y="4.5" width="10" height="9" fill="#fff" stroke="#555" stroke-width="1"/><path d="M203,7 h6 M203,9.5 h6 M203,12 h4" stroke="#555" stroke-width="0.8"/>
 <path d="M217,5 h8 v8 h-8z" fill="#999" stroke="#888"/>
 <rect x="232.5" y="2.5" width="137.5" height="13" fill="#fff" stroke="#e2e2e2"/>
 <path d="M361,7.5 L363.5,10 L366,7.5" stroke="#999" fill="none"/>
 <text x="235" y="12" font-size="8" fill="#8a8a8a" font-family="Liberation Sans">Main Model</text>
 <!-- right icons -->
 <path d="M523,6 a4.5,2.5 0 1 1 9,0 a4.5,2.5 0 1 1 -9,0" fill="#f0d040" stroke="#b09020" stroke-width="0.8"/><path d="M527,7 L527,15 L529,13 L531,16 L532,15.5 L530.5,12.5 L533,12.5Z" fill="#fff" stroke="#444" stroke-width="0.8"/>
 <path d="M539,12 L546,5 L547,12 Z" fill="#a8c8f0" stroke="#3a6fa8"/><path d="M545,3 L549,7 M549,3 L545,7" stroke="#d22" stroke-width="1.2"/><path d="M545,8 L545,15.5 L547,13.5 L549,16 L550,15.5 L548.5,13 L551,13Z" fill="#fff" stroke="#444" stroke-width="0.8"/>
 <path d="M558,3 h6 l-1,4 h2 v2 h-8 v-2 h2z" fill="#f0a060" stroke="#a06030" stroke-width="0.8"/><path d="M561,9 v5" stroke="#666"/><path d="M563,8 L563,15.5 L565,13.5 L567,16 L568,15.5 L566.5,13 L569,13Z" fill="#fff" stroke="#444" stroke-width="0.8"/>
 <path d="M575,6 L580,3 V13 L575,15Z" fill="#a8c8f0" stroke="#3a6fa8" stroke-width="0.9"/><path d="M581,8 L581,15.5 L583,13.5 L585,16 L586,15.5 L584.5,13 L587,13Z" fill="#fff" stroke="#444" stroke-width="0.8"/>
 <path d="M591,5 h5 M593.5,2.5 v5" stroke="#222" stroke-width="1.2"/><path d="M596,7 L596,15.5 L598,13.5 L600,16 L601,15.5 L599.5,13 L602,13Z" fill="#fff" stroke="#444" stroke-width="0.8"/>
 <circle cx="613.5" cy="9.5" r="3.8" fill="none" stroke="#b8b8b8" stroke-width="1.6" stroke-dasharray="1.5 1"/>
 <path d="M624,4 h10 l-4,5 v5 l-2,1 v-6z" fill="#fff" stroke="#555" stroke-width="1"/><text x="634" y="13" font-size="9" fill="#222" font-family="Liberation Sans">:0</text>
</svg>
<div class="a" style="left:0;top:687px;width:124px;height:33px;background:#050505;border-top-right-radius:7px;border-top-left-radius:4px"></div>
<div class="t" style="left:3px;top:692px;color:#fff;font-size:12px;line-height:12px;letter-spacing:0">Mohammad Paknazar</div>
<div class="t" style="left:13px;top:705px;color:#fff;font-size:12px;line-height:12px;letter-spacing:0">Www.Bimlearn.org</div>

</body></html>
